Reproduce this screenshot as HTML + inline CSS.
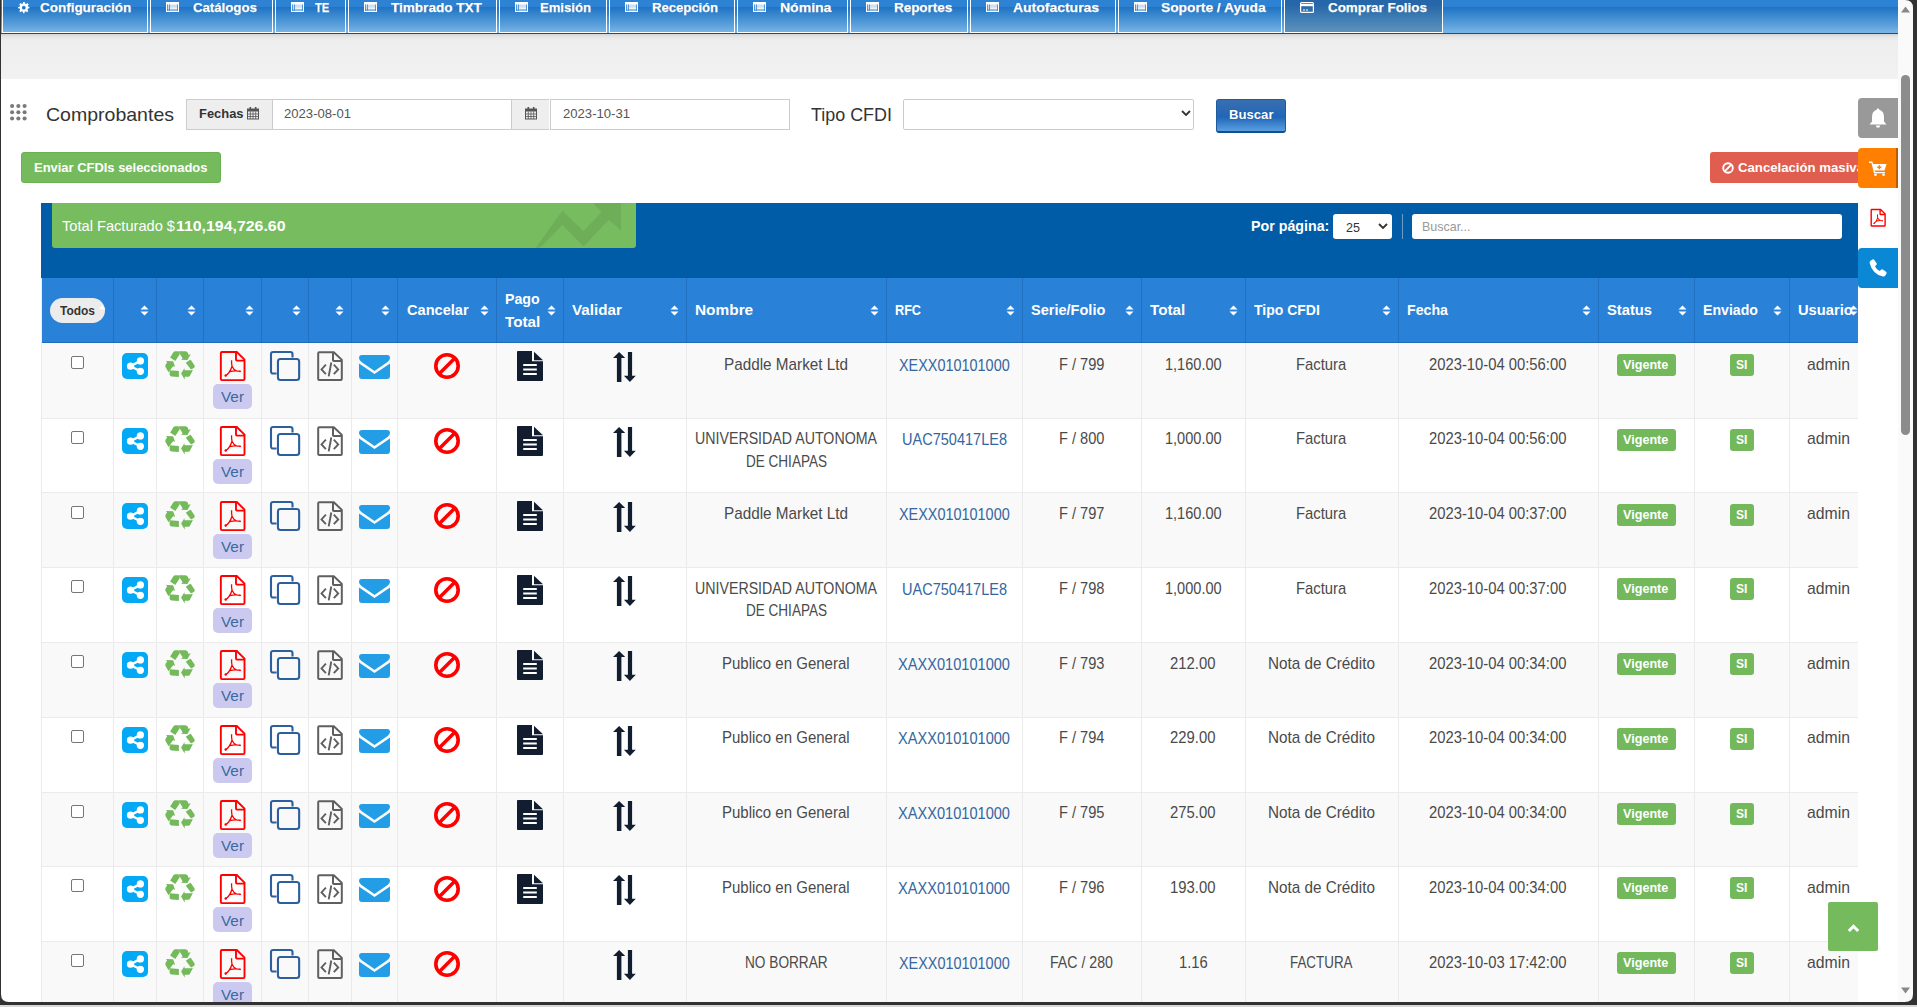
<!DOCTYPE html>
<html><head><meta charset="utf-8"><style>
html,body{margin:0;padding:0;}
body{width:1917px;height:1007px;overflow:hidden;position:relative;background:#fff;font-family:"Liberation Sans",sans-serif;}
.a{position:absolute;box-sizing:content-box;}
svg.a{overflow:visible;}
.t{position:absolute;white-space:nowrap;display:inline-block;transform-origin:0 0;}
</style></head><body>
<div class="a" style="left:1px;top:0;width:1897px;height:33px;background:linear-gradient(#2e82d4 0,#2e82d4 7px,#1f73c3 7px,#3c8ad0 16px,#5ea2dc 26px,#78b4e6 32px);"></div>
<div class="a" style="left:1px;top:33px;width:1897px;height:1px;background:#17508f;"></div>
<div class="a" style="left:2px;top:-2px;width:144px;height:34px;border:1px solid #fff;border-top:0;"></div>
<svg class="a" style="left:18px;top:1.6px;" width="11.6" height="11.3" viewBox="0 0 24 24"><path fill="#fff" d="M12 0l2 0 .6 3.2a9 9 0 0 1 2.3 1l2.7-1.9 2.8 2.8-1.9 2.7a9 9 0 0 1 1 2.3L24 10.700v2.600l-3.200.6a9 9 0 0 1-1 2.300l1.9 2.700-2.800 2.800-2.700-1.900a9 9 0 0 1-2.300 1L13.300 24h-2.600l-.6-3.200a9 9 0 0 1-2.300-1l-2.700 1.900-2.800-2.800 1.900-2.700a9 9 0 0 1-1-2.300L0 13.300v-2.600l3.200-.6a9 9 0 0 1 1-2.300L2.300 5.100l2.800-2.800 2.700 1.900a9 9 0 0 1 2.300-1L10.700 0zM12 8a4 4 0 1 0 0 8 4 4 0 1 0 0-8z"></path></svg>
<span class="t" style="left: 39.8px; top: -0.3px; font-size: 13px; line-height: 16px; color: rgb(255, 255, 255); font-weight: bold; text-shadow: rgb(26, 79, 138) -0.5px -0.5px 0.5px; -webkit-text-stroke: 0.25px rgb(255, 255, 255); transform: scaleX(1.0351);">Configuración</span>
<div class="a" style="left:150px;top:-2px;width:121px;height:34px;border:1px solid #fff;border-top:0;"></div>
<svg class="a" style="left:166px;top:2px;" width="13" height="10" viewBox="0 0 13 10"><rect x="0" y="0" width="13" height="10" fill="#fff"></rect><rect x="1" y="2.5" width="11" height="6.5" fill="#cddff0"></rect><path d="M1.5 2.5V9M3.5 2.5V9M11.5 2.5V9M1 8H12" stroke="#4a8fd6" stroke-width="0.9"></path><path d="M4 6.2H11" stroke="#fff" stroke-width="0.9"></path></svg>
<span class="t" style="left: 192.8px; top: -0.3px; font-size: 13px; line-height: 16px; color: rgb(255, 255, 255); font-weight: bold; text-shadow: rgb(26, 79, 138) -0.5px -0.5px 0.5px; -webkit-text-stroke: 0.25px rgb(255, 255, 255); transform: scaleX(1.0152);">Catálogos</span>
<div class="a" style="left:275px;top:-2px;width:69px;height:34px;border:1px solid #fff;border-top:0;"></div>
<svg class="a" style="left:291px;top:2px;" width="13" height="10" viewBox="0 0 13 10"><rect x="0" y="0" width="13" height="10" fill="#fff"></rect><rect x="1" y="2.5" width="11" height="6.5" fill="#cddff0"></rect><path d="M1.5 2.5V9M3.5 2.5V9M11.5 2.5V9M1 8H12" stroke="#4a8fd6" stroke-width="0.9"></path><path d="M4 6.2H11" stroke="#fff" stroke-width="0.9"></path></svg>
<span class="t" style="left: 315px; top: -0.3px; font-size: 13px; line-height: 16px; color: rgb(255, 255, 255); font-weight: bold; text-shadow: rgb(26, 79, 138) -0.5px -0.5px 0.5px; -webkit-text-stroke: 0.25px rgb(255, 255, 255); transform: scaleX(0.8541);">TE</span>
<div class="a" style="left:348px;top:-2px;width:147px;height:34px;border:1px solid #fff;border-top:0;"></div>
<svg class="a" style="left:364px;top:2px;" width="13" height="10" viewBox="0 0 13 10"><rect x="0" y="0" width="13" height="10" fill="#fff"></rect><rect x="1" y="2.5" width="11" height="6.5" fill="#cddff0"></rect><path d="M1.5 2.5V9M3.5 2.5V9M11.5 2.5V9M1 8H12" stroke="#4a8fd6" stroke-width="0.9"></path><path d="M4 6.2H11" stroke="#fff" stroke-width="0.9"></path></svg>
<span class="t" style="left: 390.6px; top: -0.3px; font-size: 13px; line-height: 16px; color: rgb(255, 255, 255); font-weight: bold; text-shadow: rgb(26, 79, 138) -0.5px -0.5px 0.5px; -webkit-text-stroke: 0.25px rgb(255, 255, 255); transform: scaleX(1.0418);">Timbrado TXT</span>
<div class="a" style="left:499px;top:-2px;width:106px;height:34px;border:1px solid #fff;border-top:0;"></div>
<svg class="a" style="left:515px;top:2px;" width="13" height="10" viewBox="0 0 13 10"><rect x="0" y="0" width="13" height="10" fill="#fff"></rect><rect x="1" y="2.5" width="11" height="6.5" fill="#cddff0"></rect><path d="M1.5 2.5V9M3.5 2.5V9M11.5 2.5V9M1 8H12" stroke="#4a8fd6" stroke-width="0.9"></path><path d="M4 6.2H11" stroke="#fff" stroke-width="0.9"></path></svg>
<span class="t" style="left: 539.5px; top: -0.3px; font-size: 13px; line-height: 16px; color: rgb(255, 255, 255); font-weight: bold; text-shadow: rgb(26, 79, 138) -0.5px -0.5px 0.5px; -webkit-text-stroke: 0.25px rgb(255, 255, 255); transform: scaleX(1.0064);">Emisión</span>
<div class="a" style="left:609px;top:-2px;width:124px;height:34px;border:1px solid #fff;border-top:0;"></div>
<svg class="a" style="left:625px;top:2px;" width="13" height="10" viewBox="0 0 13 10"><rect x="0" y="0" width="13" height="10" fill="#fff"></rect><rect x="1" y="2.5" width="11" height="6.5" fill="#cddff0"></rect><path d="M1.5 2.5V9M3.5 2.5V9M11.5 2.5V9M1 8H12" stroke="#4a8fd6" stroke-width="0.9"></path><path d="M4 6.2H11" stroke="#fff" stroke-width="0.9"></path></svg>
<span class="t" style="left: 652.2px; top: -0.3px; font-size: 13px; line-height: 16px; color: rgb(255, 255, 255); font-weight: bold; text-shadow: rgb(26, 79, 138) -0.5px -0.5px 0.5px; -webkit-text-stroke: 0.25px rgb(255, 255, 255); transform: scaleX(1.0038);">Recepción</span>
<div class="a" style="left:737px;top:-2px;width:109px;height:34px;border:1px solid #fff;border-top:0;"></div>
<svg class="a" style="left:753px;top:2px;" width="13" height="10" viewBox="0 0 13 10"><rect x="0" y="0" width="13" height="10" fill="#fff"></rect><rect x="1" y="2.5" width="11" height="6.5" fill="#cddff0"></rect><path d="M1.5 2.5V9M3.5 2.5V9M11.5 2.5V9M1 8H12" stroke="#4a8fd6" stroke-width="0.9"></path><path d="M4 6.2H11" stroke="#fff" stroke-width="0.9"></path></svg>
<span class="t" style="left: 780.3px; top: -0.3px; font-size: 13px; line-height: 16px; color: rgb(255, 255, 255); font-weight: bold; text-shadow: rgb(26, 79, 138) -0.5px -0.5px 0.5px; -webkit-text-stroke: 0.25px rgb(255, 255, 255); transform: scaleX(1.0782);">Nómina</span>
<div class="a" style="left:850px;top:-2px;width:116px;height:34px;border:1px solid #fff;border-top:0;"></div>
<svg class="a" style="left:866px;top:2px;" width="13" height="10" viewBox="0 0 13 10"><rect x="0" y="0" width="13" height="10" fill="#fff"></rect><rect x="1" y="2.5" width="11" height="6.5" fill="#cddff0"></rect><path d="M1.5 2.5V9M3.5 2.5V9M11.5 2.5V9M1 8H12" stroke="#4a8fd6" stroke-width="0.9"></path><path d="M4 6.2H11" stroke="#fff" stroke-width="0.9"></path></svg>
<span class="t" style="left: 893.5px; top: -0.3px; font-size: 13px; line-height: 16px; color: rgb(255, 255, 255); font-weight: bold; text-shadow: rgb(26, 79, 138) -0.5px -0.5px 0.5px; -webkit-text-stroke: 0.25px rgb(255, 255, 255); transform: scaleX(1.0327);">Reportes</span>
<div class="a" style="left:970px;top:-2px;width:144px;height:34px;border:1px solid #fff;border-top:0;"></div>
<svg class="a" style="left:986px;top:2px;" width="13" height="10" viewBox="0 0 13 10"><rect x="0" y="0" width="13" height="10" fill="#fff"></rect><rect x="1" y="2.5" width="11" height="6.5" fill="#cddff0"></rect><path d="M1.5 2.5V9M3.5 2.5V9M11.5 2.5V9M1 8H12" stroke="#4a8fd6" stroke-width="0.9"></path><path d="M4 6.2H11" stroke="#fff" stroke-width="0.9"></path></svg>
<span class="t" style="left: 1013px; top: -0.3px; font-size: 13px; line-height: 16px; color: rgb(255, 255, 255); font-weight: bold; text-shadow: rgb(26, 79, 138) -0.5px -0.5px 0.5px; -webkit-text-stroke: 0.25px rgb(255, 255, 255); transform: scaleX(1.0737);">Autofacturas</span>
<div class="a" style="left:1118px;top:-2px;width:162px;height:34px;border:1px solid #fff;border-top:0;"></div>
<svg class="a" style="left:1134px;top:2px;" width="13" height="10" viewBox="0 0 13 10"><rect x="0" y="0" width="13" height="10" fill="#fff"></rect><rect x="1" y="2.5" width="11" height="6.5" fill="#cddff0"></rect><path d="M1.5 2.5V9M3.5 2.5V9M11.5 2.5V9M1 8H12" stroke="#4a8fd6" stroke-width="0.9"></path><path d="M4 6.2H11" stroke="#fff" stroke-width="0.9"></path></svg>
<span class="t" style="left: 1160.9px; top: -0.3px; font-size: 13px; line-height: 16px; color: rgb(255, 255, 255); font-weight: bold; text-shadow: rgb(26, 79, 138) -0.5px -0.5px 0.5px; -webkit-text-stroke: 0.25px rgb(255, 255, 255); transform: scaleX(1.0596);">Soporte / Ayuda</span>
<div class="a" style="left:1284px;top:-2px;width:157px;height:34px;border:1px solid #fff;border-top:0;background:linear-gradient(#2566a8 0,#2667a9 7px,#2a68a8 8px,#3e7db4 20px,#5a8fb9 32px);"></div>
<svg class="a" style="left:1300px;top:2px;" width="14" height="11" viewBox="0 0 14 11"><rect x="0.6" y="0.6" width="12.8" height="9.8" rx="1" fill="none" stroke="#fff" stroke-width="1.2"></rect><rect x="1" y="2" width="12" height="2.2" fill="#fff"></rect><path d="M3 8h2M6 8h2" stroke="#fff" stroke-width="1"></path></svg>
<span class="t" style="left: 1328.3px; top: -0.3px; font-size: 13px; line-height: 16px; color: rgb(255, 255, 255); font-weight: bold; text-shadow: rgb(26, 79, 138) -0.5px -0.5px 0.5px; -webkit-text-stroke: 0.25px rgb(255, 255, 255); transform: scaleX(1.0294);">Comprar Folios</span>
<div class="a" style="left:1px;top:34px;width:1897px;height:45px;background:linear-gradient(#d4d4d4 0,#e6e6e6 3px,#eeeeee 7px,#f1f1f1 100%);"></div>
<svg class="a" style="left:0px;top:0px;" width="40" height="130" viewBox="0 0 40 130"><circle cx="12.10" cy="106.00" r="2.05" fill="#7a7a7a"></circle><circle cx="18.35" cy="106.00" r="2.05" fill="#7a7a7a"></circle><circle cx="24.60" cy="106.00" r="2.05" fill="#7a7a7a"></circle><circle cx="12.10" cy="112.25" r="2.05" fill="#7a7a7a"></circle><circle cx="18.35" cy="112.25" r="2.05" fill="#7a7a7a"></circle><circle cx="24.60" cy="112.25" r="2.05" fill="#7a7a7a"></circle><circle cx="12.10" cy="118.50" r="2.05" fill="#7a7a7a"></circle><circle cx="18.35" cy="118.50" r="2.05" fill="#7a7a7a"></circle><circle cx="24.60" cy="118.50" r="2.05" fill="#7a7a7a"></circle></svg>
<span class="t" style="left: 46px; top: 102.92px; font-size: 19px; line-height: 24px; color: rgb(51, 51, 51); transform: scaleX(1.0271);">Comprobantes</span>
<div class="a" style="left:186px;top:99px;width:85px;height:29px;background:#eee;border:1px solid #ccc;border-right:0;"></div>
<span class="t" style="left: 199px; top: 105.5px; font-size: 13px; line-height: 16px; color: rgb(51, 51, 51); font-weight: bold; transform: scaleX(0.993);">Fechas</span>
<svg class="a" style="left:247px;top:107px;" width="12" height="12" viewBox="0 0 12 12"><rect x="0.5" y="2" width="11" height="10" fill="none" stroke="#555" stroke-width="1"></rect><rect x="0.5" y="2" width="11" height="2.5" fill="#555"></rect><path d="M0.5 7h11M0.5 9.5h11M3.3 4.5v7.5M6 4.5v7.5M8.7 4.5v7.5" stroke="#555" stroke-width="0.8"></path><rect x="2.5" y="0" width="1.6" height="3" fill="#555"></rect><rect x="7.9" y="0" width="1.6" height="3" fill="#555"></rect></svg>
<div class="a" style="left:272px;top:99px;width:238px;height:29px;background:#fff;border:1px solid #ccc;"></div>
<span class="t" style="left: 284px; top: 106px; font-size: 13px; line-height: 16px; color: rgb(85, 85, 85); transform: scaleX(1.0075);">2023-08-01</span>
<div class="a" style="left:512px;top:99px;width:37px;height:29px;background:#eee;border:1px solid #ccc;border-left:0;border-right:0;"></div>
<svg class="a" style="left:525px;top:107px;" width="12" height="12" viewBox="0 0 12 12"><rect x="0.5" y="2" width="11" height="10" fill="none" stroke="#555" stroke-width="1"></rect><rect x="0.5" y="2" width="11" height="2.5" fill="#555"></rect><path d="M0.5 7h11M0.5 9.5h11M3.3 4.5v7.5M6 4.5v7.5M8.7 4.5v7.5" stroke="#555" stroke-width="0.8"></path><rect x="2.5" y="0" width="1.6" height="3" fill="#555"></rect><rect x="7.9" y="0" width="1.6" height="3" fill="#555"></rect></svg>
<div class="a" style="left:550px;top:99px;width:238px;height:29px;background:#fff;border:1px solid #ccc;"></div>
<span class="t" style="left: 563px; top: 106px; font-size: 13px; line-height: 16px; color: rgb(85, 85, 85); transform: scaleX(1.0075);">2023-10-31</span>
<span class="t" style="left: 811px; top: 102.92px; font-size: 19px; line-height: 24px; color: rgb(51, 51, 51); transform: scaleX(0.9432);">Tipo CFDI</span>
<div class="a" style="left:903px;top:99px;width:289px;height:29px;background:#fff;border:1px solid #ccc;border-radius:2px;"></div>
<svg class="a" style="left:1181px;top:110px;" width="10" height="7" viewBox="0 0 10 7"><path d="M1 1l4 4 4-4" fill="none" stroke="#333" stroke-width="1.8"></path></svg>
<div class="a" style="left:1216px;top:99px;width:68px;height:31px;background:linear-gradient(#3a6fb0 0,#1f66b8 55%,#5c9ee0 100%);border:1px solid #1d5aa0;border-bottom:2px solid #11508f;border-radius:3px;"></div>
<span class="t" style="left: 1229px; top: 106.5px; font-size: 13px; line-height: 16px; color: rgb(255, 255, 255); font-weight: bold; text-shadow: rgb(18, 74, 138) 0px 0px 1px; transform: scaleX(1.0096);">Buscar</span>
<div class="a" style="left:21px;top:152px;width:198px;height:29px;background:#75bb5e;border:1px solid #6bb052;border-radius:3px;"></div>
<span class="t" style="left: 34.4px; top: 159.5px; font-size: 13px; line-height: 16px; color: rgb(255, 255, 255); font-weight: bold; transform: scaleX(0.9958);">Enviar CFDIs seleccionados</span>
<div class="a" style="left:1710px;top:152px;width:160px;height:31px;background:#e05e50;border-radius:3px;"></div>
<svg class="a" style="left:1722px;top:161.5px;" width="12" height="12" viewBox="0 0 12 12"><circle cx="6" cy="6" r="4.8" fill="none" stroke="#fff" stroke-width="1.9"></circle><path d="M9.3 2.7L2.7 9.3" stroke="#fff" stroke-width="1.9"></path></svg>
<span class="t" style="left: 1737.6px; top: 159.5px; font-size: 13px; line-height: 16px; color: rgb(255, 255, 255); font-weight: bold; transform: scaleX(1.0137);">Cancelación masiva</span>
<div class="a" style="left:41px;top:203px;width:1817px;height:75px;background:#005ca6;"></div>
<div class="a" style="left:52px;top:203px;width:584px;height:45px;background:#77bc5e;border-radius:0 0 3px 3px;"></div>
<svg class="a" style="left:0px;top:0px;" width="1" height="1" viewBox="0 0 1 1"><path d="M535.9 247.8L562.4 210.5L583.4 231.2L601.4 212.2L593.2 203L621 203L621 230.5L608.8 219.7L583.4 246.5L562.4 224.8L540 247.8Z" fill="#6fae58"></path></svg>
<span class="t" style="left: 62.3px; top: 216.3px; font-size: 15px; line-height: 19px; color: rgb(255, 255, 255); transform: scaleX(0.9749);">Total Facturado $</span>
<span class="t" style="left: 175.5px; top: 216.3px; font-size: 15px; line-height: 19px; color: rgb(255, 255, 255); font-weight: bold; transform: scaleX(1.0585);">110,194,726.60</span>
<span class="t" style="left: 1250.6px; top: 216.3px; font-size: 15px; line-height: 19px; color: rgb(255, 255, 255); font-weight: bold; transform: scaleX(0.9489);">Por página:</span>
<div class="a" style="left:1333px;top:214px;width:59px;height:25px;background:#fff;border-radius:3px;"></div>
<span class="t" style="left: 1346px; top: 219.5px; font-size: 13px; line-height: 16px; color: rgb(51, 51, 51); transform: scaleX(0.9676);">25</span>
<svg class="a" style="left:1378px;top:223px;" width="10" height="7" viewBox="0 0 10 7"><path d="M1 1l4 4 4-4" fill="none" stroke="#333" stroke-width="1.8"></path></svg>
<div class="a" style="left:1402px;top:214px;width:1px;height:25px;background:#6f9cc6;"></div>
<div class="a" style="left:1412px;top:214px;width:430px;height:25px;background:#fff;border-radius:3px;"></div>
<span class="t" style="left: 1421.5px; top: 218.5px; font-size: 13px; line-height: 16px; color: rgb(153, 153, 153); transform: scaleX(0.9589);">Buscar...</span>
<div class="a" style="left:41px;top:278px;width:1817px;height:64px;background:#2981d8;"></div>
<div class="a" style="left:41px;top:342px;width:1817px;height:1px;background:#1f6cbc;"></div>
<div class="a" style="left:113px;top:278px;width:1px;height:64px;background:#2470c0;"></div>
<div class="a" style="left:156px;top:278px;width:1px;height:64px;background:#2470c0;"></div>
<div class="a" style="left:203px;top:278px;width:1px;height:64px;background:#2470c0;"></div>
<div class="a" style="left:261px;top:278px;width:1px;height:64px;background:#2470c0;"></div>
<div class="a" style="left:308px;top:278px;width:1px;height:64px;background:#2470c0;"></div>
<div class="a" style="left:351px;top:278px;width:1px;height:64px;background:#2470c0;"></div>
<div class="a" style="left:397px;top:278px;width:1px;height:64px;background:#2470c0;"></div>
<div class="a" style="left:496px;top:278px;width:1px;height:64px;background:#2470c0;"></div>
<div class="a" style="left:563px;top:278px;width:1px;height:64px;background:#2470c0;"></div>
<div class="a" style="left:686px;top:278px;width:1px;height:64px;background:#2470c0;"></div>
<div class="a" style="left:886px;top:278px;width:1px;height:64px;background:#2470c0;"></div>
<div class="a" style="left:1022px;top:278px;width:1px;height:64px;background:#2470c0;"></div>
<div class="a" style="left:1141px;top:278px;width:1px;height:64px;background:#2470c0;"></div>
<div class="a" style="left:1245px;top:278px;width:1px;height:64px;background:#2470c0;"></div>
<div class="a" style="left:1398px;top:278px;width:1px;height:64px;background:#2470c0;"></div>
<div class="a" style="left:1598px;top:278px;width:1px;height:64px;background:#2470c0;"></div>
<div class="a" style="left:1694px;top:278px;width:1px;height:64px;background:#2470c0;"></div>
<div class="a" style="left:1789px;top:278px;width:1px;height:64px;background:#2470c0;"></div>
<div class="a" style="left:41px;top:278px;width:1px;height:65px;background:#e6eef8;"></div>
<div class="a" style="left:50px;top:298px;width:55px;height:25px;background:#ececec;border-radius:13px;"></div>
<span class="t" style="left: 60px; top: 302.5px; font-size: 13px; line-height: 16px; color: rgb(51, 51, 51); font-weight: bold; transform: scaleX(0.9203);">Todos</span>
<svg class="a" style="left:0px;top:0px;" width="1" height="1" viewBox="0 0 1 1"><path d="M98.3 309.3L102 305.5L105.7 309.3Z" fill="#fff"></path></svg>
<svg class="a" style="left:140.0px;top:304.5px;" width="9" height="11" viewBox="0 0 9 11"><path d="M0.5 4.6L4.5 0.5 8.5 4.6Z M0.5 6.4L4.5 10.5 8.5 6.4Z" fill="#fff"></path></svg>
<svg class="a" style="left:187.0px;top:304.5px;" width="9" height="11" viewBox="0 0 9 11"><path d="M0.5 4.6L4.5 0.5 8.5 4.6Z M0.5 6.4L4.5 10.5 8.5 6.4Z" fill="#fff"></path></svg>
<svg class="a" style="left:245.0px;top:304.5px;" width="9" height="11" viewBox="0 0 9 11"><path d="M0.5 4.6L4.5 0.5 8.5 4.6Z M0.5 6.4L4.5 10.5 8.5 6.4Z" fill="#fff"></path></svg>
<svg class="a" style="left:292.0px;top:304.5px;" width="9" height="11" viewBox="0 0 9 11"><path d="M0.5 4.6L4.5 0.5 8.5 4.6Z M0.5 6.4L4.5 10.5 8.5 6.4Z" fill="#fff"></path></svg>
<svg class="a" style="left:335.0px;top:304.5px;" width="9" height="11" viewBox="0 0 9 11"><path d="M0.5 4.6L4.5 0.5 8.5 4.6Z M0.5 6.4L4.5 10.5 8.5 6.4Z" fill="#fff"></path></svg>
<svg class="a" style="left:381.0px;top:304.5px;" width="9" height="11" viewBox="0 0 9 11"><path d="M0.5 4.6L4.5 0.5 8.5 4.6Z M0.5 6.4L4.5 10.5 8.5 6.4Z" fill="#fff"></path></svg>
<svg class="a" style="left:480.0px;top:304.5px;" width="9" height="11" viewBox="0 0 9 11"><path d="M0.5 4.6L4.5 0.5 8.5 4.6Z M0.5 6.4L4.5 10.5 8.5 6.4Z" fill="#fff"></path></svg>
<svg class="a" style="left:547.0px;top:304.5px;" width="9" height="11" viewBox="0 0 9 11"><path d="M0.5 4.6L4.5 0.5 8.5 4.6Z M0.5 6.4L4.5 10.5 8.5 6.4Z" fill="#fff"></path></svg>
<svg class="a" style="left:670.0px;top:304.5px;" width="9" height="11" viewBox="0 0 9 11"><path d="M0.5 4.6L4.5 0.5 8.5 4.6Z M0.5 6.4L4.5 10.5 8.5 6.4Z" fill="#fff"></path></svg>
<svg class="a" style="left:870.0px;top:304.5px;" width="9" height="11" viewBox="0 0 9 11"><path d="M0.5 4.6L4.5 0.5 8.5 4.6Z M0.5 6.4L4.5 10.5 8.5 6.4Z" fill="#fff"></path></svg>
<svg class="a" style="left:1006.0px;top:304.5px;" width="9" height="11" viewBox="0 0 9 11"><path d="M0.5 4.6L4.5 0.5 8.5 4.6Z M0.5 6.4L4.5 10.5 8.5 6.4Z" fill="#fff"></path></svg>
<svg class="a" style="left:1125.0px;top:304.5px;" width="9" height="11" viewBox="0 0 9 11"><path d="M0.5 4.6L4.5 0.5 8.5 4.6Z M0.5 6.4L4.5 10.5 8.5 6.4Z" fill="#fff"></path></svg>
<svg class="a" style="left:1229.0px;top:304.5px;" width="9" height="11" viewBox="0 0 9 11"><path d="M0.5 4.6L4.5 0.5 8.5 4.6Z M0.5 6.4L4.5 10.5 8.5 6.4Z" fill="#fff"></path></svg>
<svg class="a" style="left:1382.0px;top:304.5px;" width="9" height="11" viewBox="0 0 9 11"><path d="M0.5 4.6L4.5 0.5 8.5 4.6Z M0.5 6.4L4.5 10.5 8.5 6.4Z" fill="#fff"></path></svg>
<svg class="a" style="left:1582.0px;top:304.5px;" width="9" height="11" viewBox="0 0 9 11"><path d="M0.5 4.6L4.5 0.5 8.5 4.6Z M0.5 6.4L4.5 10.5 8.5 6.4Z" fill="#fff"></path></svg>
<svg class="a" style="left:1678.0px;top:304.5px;" width="9" height="11" viewBox="0 0 9 11"><path d="M0.5 4.6L4.5 0.5 8.5 4.6Z M0.5 6.4L4.5 10.5 8.5 6.4Z" fill="#fff"></path></svg>
<svg class="a" style="left:1773.0px;top:304.5px;" width="9" height="11" viewBox="0 0 9 11"><path d="M0.5 4.6L4.5 0.5 8.5 4.6Z M0.5 6.4L4.5 10.5 8.5 6.4Z" fill="#fff"></path></svg>
<svg class="a" style="left:1849.0px;top:304.5px;" width="9" height="11" viewBox="0 0 9 11"><path d="M0.5 4.6L4.5 0.5 8.5 4.6Z M0.5 6.4L4.5 10.5 8.5 6.4Z" fill="#fff"></path></svg>
<span class="t" style="left: 407.4px; top: 299.5px; font-size: 15px; line-height: 19px; color: rgb(255, 255, 255); font-weight: bold; transform: scaleX(0.972);">Cancelar</span>
<span class="t" style="left: 572px; top: 299.5px; font-size: 15px; line-height: 19px; color: rgb(255, 255, 255); font-weight: bold; transform: scaleX(1.0121);">Validar</span>
<span class="t" style="left: 694.6px; top: 299.5px; font-size: 15px; line-height: 19px; color: rgb(255, 255, 255); font-weight: bold; transform: scaleX(1.0267);">Nombre</span>
<span class="t" style="left: 895px; top: 299.5px; font-size: 15px; line-height: 19px; color: rgb(255, 255, 255); font-weight: bold; transform: scaleX(0.8434);">RFC</span>
<span class="t" style="left: 1031px; top: 299.5px; font-size: 15px; line-height: 19px; color: rgb(255, 255, 255); font-weight: bold; transform: scaleX(0.9689);">Serie/Folio</span>
<span class="t" style="left: 1150px; top: 299.5px; font-size: 15px; line-height: 19px; color: rgb(255, 255, 255); font-weight: bold; transform: scaleX(1.0139);">Total</span>
<span class="t" style="left: 1254px; top: 299.5px; font-size: 15px; line-height: 19px; color: rgb(255, 255, 255); font-weight: bold; transform: scaleX(0.9327);">Tipo CFDI</span>
<span class="t" style="left: 1406.7px; top: 299.5px; font-size: 15px; line-height: 19px; color: rgb(255, 255, 255); font-weight: bold; transform: scaleX(0.9456);">Fecha</span>
<span class="t" style="left: 1606.5px; top: 299.5px; font-size: 15px; line-height: 19px; color: rgb(255, 255, 255); font-weight: bold; transform: scaleX(0.9816);">Status</span>
<span class="t" style="left: 1703px; top: 299.5px; font-size: 15px; line-height: 19px; color: rgb(255, 255, 255); font-weight: bold; transform: scaleX(0.9424);">Enviado</span>
<span class="t" style="left: 1797.9px; top: 299.5px; font-size: 15px; line-height: 19px; color: rgb(255, 255, 255); font-weight: bold; transform: scaleX(0.9792);">Usuario</span>
<span class="t" style="left: 505px; top: 289.3px; font-size: 15px; line-height: 19px; color: rgb(255, 255, 255); font-weight: bold; transform: scaleX(0.9431);">Pago</span>
<span class="t" style="left: 505px; top: 311.6px; font-size: 15px; line-height: 19px; color: rgb(255, 255, 255); font-weight: bold; transform: scaleX(1.0167);">Total</span>
<div class="a" style="left:41px;top:343.00px;width:1817px;height:74.75px;background:#f9f9f9;"></div>
<div class="a" style="left:71px;top:356.0px;width:11px;height:11px;background:#fff;border:1px solid #767676;border-radius:2px;"></div>
<svg class="a" style="left:122px;top:353.0px;" width="26" height="26" viewBox="0 0 26 26"><rect width="26" height="26" rx="5" fill="#03a9f4"></rect><circle cx="8.5" cy="13.2" r="3.6" fill="#fff"></circle><circle cx="18.4" cy="7.9" r="3.6" fill="#fff"></circle><circle cx="18.4" cy="18.3" r="3.6" fill="#fff"></circle><path d="M8.5 13.2L18.4 7.9M8.5 13.2L18.4 18.3" stroke="#fff" stroke-width="2.4"></path></svg>
<svg class="a" style="left:160px;top:346.0px;" width="40" height="40" viewBox="0 0 40 40"><g fill="#74b95a"><path d="M10.1 11.5L13.6 5.9Q14.5 5 15.8 5.2L18.3 5.3L19.9 8.1L15.3 15.1Z"></path><path d="M18.5 5.2L25.4 5.2Q27 5.4 27.8 6.8L28.6 8.9L30.8 8L27.4 13.9L21.1 13.7L22.6 12.3L19.9 7.9Z"></path><path d="M25.8 16.7L29.8 13.9Q30.6 13.5 31.2 14.4L34.6 19.5Q35 21 34.2 21.8L31 23.4Z"></path><path d="M33 23.8L29.8 30Q29.4 30.7 28.4 30.8L24.8 30.8L24.6 33.4L21.1 27.4L24.4 22.2L24.6 24.2L31.5 24.2Z"></path><path d="M9.7 24.2L18.9 25L18.9 31L11.5 30.6Q9.9 30.3 9.6 28.5Z"></path><path d="M6 15.1L13.1 15.3L15.1 20.7L13.1 20.2L8.5 26.2L5.5 21Q5 20 5.6 18.8L7.2 16.3Z"></path></g></svg>
<svg class="a" style="left:212px;top:346.0px;" width="40" height="40" viewBox="0 0 40 40"><path d="M9.9 6H24.8L32.5 13.6V33Q32.5 34.1 31.4 34.1H9.9Q8.85 34.1 8.85 33V7Q8.85 6 9.9 6Z" fill="none" stroke="#f00" stroke-width="1.9"></path><path d="M24 6V13.6Q24 14.6 25 14.6H32.5" fill="none" stroke="#f00" stroke-width="1.9"></path><path d="M19.6 14.3C19.4 16.5 19.6 18.5 20 20.2C18.8 24 16.5 28 13.2 30M20 20.2C21 22.5 22.5 24 24.5 24.8C26 25.2 28.2 25 28.5 25.5M17.8 25.6C20 25 22.5 24.7 24.5 24.8" fill="none" stroke="#f00" stroke-width="1.3"></path><circle cx="13.7" cy="29.5" r="1.2" fill="#f00"></circle><circle cx="28" cy="25.3" r="0.9" fill="#f00"></circle></svg>
<div class="a" style="left:213px;top:384.0px;width:39px;height:25px;background:#cbc9f0;border-radius:5px;"></div>
<span class="t" style="left: 221px; top: 387.3px; font-size: 15px; line-height: 19px; color: rgb(58, 106, 160); transform: scaleX(1.0215);">Ver</span>
<svg class="a" style="left:270px;top:351.0px;" width="31" height="31" viewBox="0 0 31 31"><path d="M6.6 22.5H3.2Q1 22.5 1 20.3V3.2Q1 1 3.2 1H20.3Q22.5 1 22.5 3.2V6.6" fill="none" stroke="#2c5f9c" stroke-width="2.1"></path><rect x="7.95" y="7.95" width="21.2" height="21" rx="2.5" fill="none" stroke="#2c5f9c" stroke-width="2.1"></rect></svg>
<svg class="a" style="left:317px;top:351.0px;" width="26" height="30.5" viewBox="0 0 26 30.5"><path d="M2.2 1.2H16.8L24.8 8.9V28Q24.8 29 23.8 29H2.2Q1.2 29 1.2 28V2.2Q1.2 1.2 2.2 1.2Z" fill="none" stroke="#5f5f5f" stroke-width="2"></path><path d="M16 1.2V9.2Q16 10 16.8 10H24.8" fill="none" stroke="#5f5f5f" stroke-width="2"></path><path d="M8.9 13.7L4.5 18.4L8.9 23.2M16.8 13.7L21.2 18.4L16.8 23.2M14.3 11.5L11.7 25.4" fill="none" stroke="#5f5f5f" stroke-width="1.9"></path></svg>
<svg class="a" style="left:359px;top:355.0px;" width="31" height="24" viewBox="0 0 31 24"><path d="M0 3Q0 0 3 0H28Q31 0 31 3Q31 5 28.5 7L15.5 16L2.5 7Q0 5 0 3Z" fill="#229de6"></path><path d="M0 8.5L15.5 19L31 8.5V21Q31 24 28 24H3Q0 24 0 21Z" fill="#229de6"></path></svg>
<svg class="a" style="left:434px;top:353.0px;" width="26" height="26" viewBox="0 0 26 26"><circle cx="13" cy="13" r="11.2" fill="none" stroke="#f00" stroke-width="3.6"></circle><path d="M20.5 5.5L5.5 20.5" stroke="#f00" stroke-width="3.6"></path></svg>
<svg class="a" style="left:517px;top:351.0px;" width="26" height="30" viewBox="0 0 26 30"><path d="M0.8 0Q0 0 0 1V29.3Q0 30 0.8 30H25Q26 30 26 29V10.2H15V0Z" fill="#121e30"></path><path d="M17 0.8L26 9.3H17Z" fill="#121e30"></path><path d="M6.2 14h13.6M6.2 18.5h13.6M6.2 23h13.6" stroke="#fff" stroke-width="1.9"></path></svg>
<svg class="a" style="left:613px;top:352.0px;" width="23" height="30" viewBox="0 0 23 30"><path d="M0 6H3.9V30H8.4V6H12.2L6.1 0Z" fill="#121e30"></path><path d="M14.9 0H19.1V23.7H22.8L16.9 30L10.9 23.7H14.9Z" fill="#121e30"></path></svg>
<span class="t" style="left: 724px; top: 354.51px; font-size: 15.7px; line-height: 20px; color: rgb(74, 74, 74); transform: scaleX(0.9739);">Paddle Market Ltd</span>
<span class="t" style="left: 898.65px; top: 355.51px; font-size: 15.7px; line-height: 20px; color: rgb(52, 102, 160); transform: scaleX(0.9195);">XEXX010101000</span>
<span class="t" style="left: 1058.75px; top: 354.51px; font-size: 15.7px; line-height: 20px; color: rgb(74, 74, 74); transform: scaleX(0.9315);">F / 799</span>
<span class="t" style="left: 1164.7px; top: 354.51px; font-size: 15.7px; line-height: 20px; color: rgb(74, 74, 74); transform: scaleX(0.9267);">1,160.00</span>
<span class="t" style="left: 1296.45px; top: 354.51px; font-size: 15.7px; line-height: 20px; color: rgb(74, 74, 74); transform: scaleX(0.942);">Factura</span>
<span class="t" style="left: 1429.3px; top: 354.51px; font-size: 15.7px; line-height: 20px; color: rgb(74, 74, 74); transform: scaleX(0.9432);">2023-10-04 00:56:00</span>
<div class="a" style="left:1617px;top:354.0px;width:59px;height:22px;background:#74b85c;border-radius:3px;"></div>
<span class="t" style="left: 1623.35px; top: 357px; font-size: 13px; line-height: 16px; color: rgb(255, 255, 255); font-weight: bold; transform: scaleX(0.9696);">Vigente</span>
<div class="a" style="left:1730px;top:354.0px;width:24px;height:22px;background:#74b85c;border-radius:3px;"></div>
<span class="t" style="left: 1736.3px; top: 357px; font-size: 13px; line-height: 16px; color: rgb(255, 255, 255); font-weight: bold; transform: scaleX(0.9271);">SI</span>
<span class="t" style="left: 1806.8px; top: 354.51px; font-size: 15.7px; line-height: 20px; color: rgb(74, 74, 74); transform: scaleX(1.0062);">admin</span>
<div class="a" style="left:41px;top:417.75px;width:1817px;height:74.75px;background:#fff;"></div>
<div class="a" style="left:41px;top:417.5px;width:1817px;height:1px;background:#ebebeb;"></div>
<div class="a" style="left:71px;top:430.75px;width:11px;height:11px;background:#fff;border:1px solid #767676;border-radius:2px;"></div>
<svg class="a" style="left:122px;top:427.75px;" width="26" height="26" viewBox="0 0 26 26"><rect width="26" height="26" rx="5" fill="#03a9f4"></rect><circle cx="8.5" cy="13.2" r="3.6" fill="#fff"></circle><circle cx="18.4" cy="7.9" r="3.6" fill="#fff"></circle><circle cx="18.4" cy="18.3" r="3.6" fill="#fff"></circle><path d="M8.5 13.2L18.4 7.9M8.5 13.2L18.4 18.3" stroke="#fff" stroke-width="2.4"></path></svg>
<svg class="a" style="left:160px;top:420.75px;" width="40" height="40" viewBox="0 0 40 40"><g fill="#74b95a"><path d="M10.1 11.5L13.6 5.9Q14.5 5 15.8 5.2L18.3 5.3L19.9 8.1L15.3 15.1Z"></path><path d="M18.5 5.2L25.4 5.2Q27 5.4 27.8 6.8L28.6 8.9L30.8 8L27.4 13.9L21.1 13.7L22.6 12.3L19.9 7.9Z"></path><path d="M25.8 16.7L29.8 13.9Q30.6 13.5 31.2 14.4L34.6 19.5Q35 21 34.2 21.8L31 23.4Z"></path><path d="M33 23.8L29.8 30Q29.4 30.7 28.4 30.8L24.8 30.8L24.6 33.4L21.1 27.4L24.4 22.2L24.6 24.2L31.5 24.2Z"></path><path d="M9.7 24.2L18.9 25L18.9 31L11.5 30.6Q9.9 30.3 9.6 28.5Z"></path><path d="M6 15.1L13.1 15.3L15.1 20.7L13.1 20.2L8.5 26.2L5.5 21Q5 20 5.6 18.8L7.2 16.3Z"></path></g></svg>
<svg class="a" style="left:212px;top:420.75px;" width="40" height="40" viewBox="0 0 40 40"><path d="M9.9 6H24.8L32.5 13.6V33Q32.5 34.1 31.4 34.1H9.9Q8.85 34.1 8.85 33V7Q8.85 6 9.9 6Z" fill="none" stroke="#f00" stroke-width="1.9"></path><path d="M24 6V13.6Q24 14.6 25 14.6H32.5" fill="none" stroke="#f00" stroke-width="1.9"></path><path d="M19.6 14.3C19.4 16.5 19.6 18.5 20 20.2C18.8 24 16.5 28 13.2 30M20 20.2C21 22.5 22.5 24 24.5 24.8C26 25.2 28.2 25 28.5 25.5M17.8 25.6C20 25 22.5 24.7 24.5 24.8" fill="none" stroke="#f00" stroke-width="1.3"></path><circle cx="13.7" cy="29.5" r="1.2" fill="#f00"></circle><circle cx="28" cy="25.3" r="0.9" fill="#f00"></circle></svg>
<div class="a" style="left:213px;top:458.75px;width:39px;height:25px;background:#cbc9f0;border-radius:5px;"></div>
<span class="t" style="left: 221px; top: 462.05px; font-size: 15px; line-height: 19px; color: rgb(58, 106, 160); transform: scaleX(1.0215);">Ver</span>
<svg class="a" style="left:270px;top:425.75px;" width="31" height="31" viewBox="0 0 31 31"><path d="M6.6 22.5H3.2Q1 22.5 1 20.3V3.2Q1 1 3.2 1H20.3Q22.5 1 22.5 3.2V6.6" fill="none" stroke="#2c5f9c" stroke-width="2.1"></path><rect x="7.95" y="7.95" width="21.2" height="21" rx="2.5" fill="none" stroke="#2c5f9c" stroke-width="2.1"></rect></svg>
<svg class="a" style="left:317px;top:425.75px;" width="26" height="30.5" viewBox="0 0 26 30.5"><path d="M2.2 1.2H16.8L24.8 8.9V28Q24.8 29 23.8 29H2.2Q1.2 29 1.2 28V2.2Q1.2 1.2 2.2 1.2Z" fill="none" stroke="#5f5f5f" stroke-width="2"></path><path d="M16 1.2V9.2Q16 10 16.8 10H24.8" fill="none" stroke="#5f5f5f" stroke-width="2"></path><path d="M8.9 13.7L4.5 18.4L8.9 23.2M16.8 13.7L21.2 18.4L16.8 23.2M14.3 11.5L11.7 25.4" fill="none" stroke="#5f5f5f" stroke-width="1.9"></path></svg>
<svg class="a" style="left:359px;top:429.75px;" width="31" height="24" viewBox="0 0 31 24"><path d="M0 3Q0 0 3 0H28Q31 0 31 3Q31 5 28.5 7L15.5 16L2.5 7Q0 5 0 3Z" fill="#229de6"></path><path d="M0 8.5L15.5 19L31 8.5V21Q31 24 28 24H3Q0 24 0 21Z" fill="#229de6"></path></svg>
<svg class="a" style="left:434px;top:427.75px;" width="26" height="26" viewBox="0 0 26 26"><circle cx="13" cy="13" r="11.2" fill="none" stroke="#f00" stroke-width="3.6"></circle><path d="M20.5 5.5L5.5 20.5" stroke="#f00" stroke-width="3.6"></path></svg>
<svg class="a" style="left:517px;top:425.75px;" width="26" height="30" viewBox="0 0 26 30"><path d="M0.8 0Q0 0 0 1V29.3Q0 30 0.8 30H25Q26 30 26 29V10.2H15V0Z" fill="#121e30"></path><path d="M17 0.8L26 9.3H17Z" fill="#121e30"></path><path d="M6.2 14h13.6M6.2 18.5h13.6M6.2 23h13.6" stroke="#fff" stroke-width="1.9"></path></svg>
<svg class="a" style="left:613px;top:426.75px;" width="23" height="30" viewBox="0 0 23 30"><path d="M0 6H3.9V30H8.4V6H12.2L6.1 0Z" fill="#121e30"></path><path d="M14.9 0H19.1V23.7H22.8L16.9 30L10.9 23.7H14.9Z" fill="#121e30"></path></svg>
<span class="t" style="left: 695px; top: 429.26px; font-size: 15.7px; line-height: 20px; color: rgb(74, 74, 74); transform: scaleX(0.9051);">UNIVERSIDAD AUTONOMA</span>
<span class="t" style="left: 745.5px; top: 451.96px; font-size: 15.7px; line-height: 20px; color: rgb(74, 74, 74); transform: scaleX(0.863);">DE CHIAPAS</span>
<span class="t" style="left: 901.5px; top: 430.26px; font-size: 15.7px; line-height: 20px; color: rgb(52, 102, 160); transform: scaleX(0.926);">UAC750417LE8</span>
<span class="t" style="left: 1058.75px; top: 429.26px; font-size: 15.7px; line-height: 20px; color: rgb(74, 74, 74); transform: scaleX(0.9315);">F / 800</span>
<span class="t" style="left: 1164.7px; top: 429.26px; font-size: 15.7px; line-height: 20px; color: rgb(74, 74, 74); transform: scaleX(0.9267);">1,000.00</span>
<span class="t" style="left: 1296.45px; top: 429.26px; font-size: 15.7px; line-height: 20px; color: rgb(74, 74, 74); transform: scaleX(0.942);">Factura</span>
<span class="t" style="left: 1429.3px; top: 429.26px; font-size: 15.7px; line-height: 20px; color: rgb(74, 74, 74); transform: scaleX(0.9432);">2023-10-04 00:56:00</span>
<div class="a" style="left:1617px;top:428.75px;width:59px;height:22px;background:#74b85c;border-radius:3px;"></div>
<span class="t" style="left: 1623.35px; top: 431.75px; font-size: 13px; line-height: 16px; color: rgb(255, 255, 255); font-weight: bold; transform: scaleX(0.9696);">Vigente</span>
<div class="a" style="left:1730px;top:428.75px;width:24px;height:22px;background:#74b85c;border-radius:3px;"></div>
<span class="t" style="left: 1736.3px; top: 431.75px; font-size: 13px; line-height: 16px; color: rgb(255, 255, 255); font-weight: bold; transform: scaleX(0.9271);">SI</span>
<span class="t" style="left: 1806.8px; top: 429.26px; font-size: 15.7px; line-height: 20px; color: rgb(74, 74, 74); transform: scaleX(1.0062);">admin</span>
<div class="a" style="left:41px;top:492.50px;width:1817px;height:74.75px;background:#f9f9f9;"></div>
<div class="a" style="left:41px;top:491.5px;width:1817px;height:1px;background:#ebebeb;"></div>
<div class="a" style="left:71px;top:505.5px;width:11px;height:11px;background:#fff;border:1px solid #767676;border-radius:2px;"></div>
<svg class="a" style="left:122px;top:502.5px;" width="26" height="26" viewBox="0 0 26 26"><rect width="26" height="26" rx="5" fill="#03a9f4"></rect><circle cx="8.5" cy="13.2" r="3.6" fill="#fff"></circle><circle cx="18.4" cy="7.9" r="3.6" fill="#fff"></circle><circle cx="18.4" cy="18.3" r="3.6" fill="#fff"></circle><path d="M8.5 13.2L18.4 7.9M8.5 13.2L18.4 18.3" stroke="#fff" stroke-width="2.4"></path></svg>
<svg class="a" style="left:160px;top:495.5px;" width="40" height="40" viewBox="0 0 40 40"><g fill="#74b95a"><path d="M10.1 11.5L13.6 5.9Q14.5 5 15.8 5.2L18.3 5.3L19.9 8.1L15.3 15.1Z"></path><path d="M18.5 5.2L25.4 5.2Q27 5.4 27.8 6.8L28.6 8.9L30.8 8L27.4 13.9L21.1 13.7L22.6 12.3L19.9 7.9Z"></path><path d="M25.8 16.7L29.8 13.9Q30.6 13.5 31.2 14.4L34.6 19.5Q35 21 34.2 21.8L31 23.4Z"></path><path d="M33 23.8L29.8 30Q29.4 30.7 28.4 30.8L24.8 30.8L24.6 33.4L21.1 27.4L24.4 22.2L24.6 24.2L31.5 24.2Z"></path><path d="M9.7 24.2L18.9 25L18.9 31L11.5 30.6Q9.9 30.3 9.6 28.5Z"></path><path d="M6 15.1L13.1 15.3L15.1 20.7L13.1 20.2L8.5 26.2L5.5 21Q5 20 5.6 18.8L7.2 16.3Z"></path></g></svg>
<svg class="a" style="left:212px;top:495.5px;" width="40" height="40" viewBox="0 0 40 40"><path d="M9.9 6H24.8L32.5 13.6V33Q32.5 34.1 31.4 34.1H9.9Q8.85 34.1 8.85 33V7Q8.85 6 9.9 6Z" fill="none" stroke="#f00" stroke-width="1.9"></path><path d="M24 6V13.6Q24 14.6 25 14.6H32.5" fill="none" stroke="#f00" stroke-width="1.9"></path><path d="M19.6 14.3C19.4 16.5 19.6 18.5 20 20.2C18.8 24 16.5 28 13.2 30M20 20.2C21 22.5 22.5 24 24.5 24.8C26 25.2 28.2 25 28.5 25.5M17.8 25.6C20 25 22.5 24.7 24.5 24.8" fill="none" stroke="#f00" stroke-width="1.3"></path><circle cx="13.7" cy="29.5" r="1.2" fill="#f00"></circle><circle cx="28" cy="25.3" r="0.9" fill="#f00"></circle></svg>
<div class="a" style="left:213px;top:533.5px;width:39px;height:25px;background:#cbc9f0;border-radius:5px;"></div>
<span class="t" style="left: 221px; top: 536.8px; font-size: 15px; line-height: 19px; color: rgb(58, 106, 160); transform: scaleX(1.0215);">Ver</span>
<svg class="a" style="left:270px;top:500.5px;" width="31" height="31" viewBox="0 0 31 31"><path d="M6.6 22.5H3.2Q1 22.5 1 20.3V3.2Q1 1 3.2 1H20.3Q22.5 1 22.5 3.2V6.6" fill="none" stroke="#2c5f9c" stroke-width="2.1"></path><rect x="7.95" y="7.95" width="21.2" height="21" rx="2.5" fill="none" stroke="#2c5f9c" stroke-width="2.1"></rect></svg>
<svg class="a" style="left:317px;top:500.5px;" width="26" height="30.5" viewBox="0 0 26 30.5"><path d="M2.2 1.2H16.8L24.8 8.9V28Q24.8 29 23.8 29H2.2Q1.2 29 1.2 28V2.2Q1.2 1.2 2.2 1.2Z" fill="none" stroke="#5f5f5f" stroke-width="2"></path><path d="M16 1.2V9.2Q16 10 16.8 10H24.8" fill="none" stroke="#5f5f5f" stroke-width="2"></path><path d="M8.9 13.7L4.5 18.4L8.9 23.2M16.8 13.7L21.2 18.4L16.8 23.2M14.3 11.5L11.7 25.4" fill="none" stroke="#5f5f5f" stroke-width="1.9"></path></svg>
<svg class="a" style="left:359px;top:504.5px;" width="31" height="24" viewBox="0 0 31 24"><path d="M0 3Q0 0 3 0H28Q31 0 31 3Q31 5 28.5 7L15.5 16L2.5 7Q0 5 0 3Z" fill="#229de6"></path><path d="M0 8.5L15.5 19L31 8.5V21Q31 24 28 24H3Q0 24 0 21Z" fill="#229de6"></path></svg>
<svg class="a" style="left:434px;top:502.5px;" width="26" height="26" viewBox="0 0 26 26"><circle cx="13" cy="13" r="11.2" fill="none" stroke="#f00" stroke-width="3.6"></circle><path d="M20.5 5.5L5.5 20.5" stroke="#f00" stroke-width="3.6"></path></svg>
<svg class="a" style="left:517px;top:500.5px;" width="26" height="30" viewBox="0 0 26 30"><path d="M0.8 0Q0 0 0 1V29.3Q0 30 0.8 30H25Q26 30 26 29V10.2H15V0Z" fill="#121e30"></path><path d="M17 0.8L26 9.3H17Z" fill="#121e30"></path><path d="M6.2 14h13.6M6.2 18.5h13.6M6.2 23h13.6" stroke="#fff" stroke-width="1.9"></path></svg>
<svg class="a" style="left:613px;top:501.5px;" width="23" height="30" viewBox="0 0 23 30"><path d="M0 6H3.9V30H8.4V6H12.2L6.1 0Z" fill="#121e30"></path><path d="M14.9 0H19.1V23.7H22.8L16.9 30L10.9 23.7H14.9Z" fill="#121e30"></path></svg>
<span class="t" style="left: 724px; top: 504.01px; font-size: 15.7px; line-height: 20px; color: rgb(74, 74, 74); transform: scaleX(0.9739);">Paddle Market Ltd</span>
<span class="t" style="left: 898.65px; top: 505.01px; font-size: 15.7px; line-height: 20px; color: rgb(52, 102, 160); transform: scaleX(0.9195);">XEXX010101000</span>
<span class="t" style="left: 1058.75px; top: 504.01px; font-size: 15.7px; line-height: 20px; color: rgb(74, 74, 74); transform: scaleX(0.9315);">F / 797</span>
<span class="t" style="left: 1164.7px; top: 504.01px; font-size: 15.7px; line-height: 20px; color: rgb(74, 74, 74); transform: scaleX(0.9267);">1,160.00</span>
<span class="t" style="left: 1296.45px; top: 504.01px; font-size: 15.7px; line-height: 20px; color: rgb(74, 74, 74); transform: scaleX(0.942);">Factura</span>
<span class="t" style="left: 1429.3px; top: 504.01px; font-size: 15.7px; line-height: 20px; color: rgb(74, 74, 74); transform: scaleX(0.9432);">2023-10-04 00:37:00</span>
<div class="a" style="left:1617px;top:503.5px;width:59px;height:22px;background:#74b85c;border-radius:3px;"></div>
<span class="t" style="left: 1623.35px; top: 506.5px; font-size: 13px; line-height: 16px; color: rgb(255, 255, 255); font-weight: bold; transform: scaleX(0.9696);">Vigente</span>
<div class="a" style="left:1730px;top:503.5px;width:24px;height:22px;background:#74b85c;border-radius:3px;"></div>
<span class="t" style="left: 1736.3px; top: 506.5px; font-size: 13px; line-height: 16px; color: rgb(255, 255, 255); font-weight: bold; transform: scaleX(0.9271);">SI</span>
<span class="t" style="left: 1806.8px; top: 504.01px; font-size: 15.7px; line-height: 20px; color: rgb(74, 74, 74); transform: scaleX(1.0062);">admin</span>
<div class="a" style="left:41px;top:567.25px;width:1817px;height:74.75px;background:#fff;"></div>
<div class="a" style="left:41px;top:566.5px;width:1817px;height:1px;background:#ebebeb;"></div>
<div class="a" style="left:71px;top:580.25px;width:11px;height:11px;background:#fff;border:1px solid #767676;border-radius:2px;"></div>
<svg class="a" style="left:122px;top:577.25px;" width="26" height="26" viewBox="0 0 26 26"><rect width="26" height="26" rx="5" fill="#03a9f4"></rect><circle cx="8.5" cy="13.2" r="3.6" fill="#fff"></circle><circle cx="18.4" cy="7.9" r="3.6" fill="#fff"></circle><circle cx="18.4" cy="18.3" r="3.6" fill="#fff"></circle><path d="M8.5 13.2L18.4 7.9M8.5 13.2L18.4 18.3" stroke="#fff" stroke-width="2.4"></path></svg>
<svg class="a" style="left:160px;top:570.25px;" width="40" height="40" viewBox="0 0 40 40"><g fill="#74b95a"><path d="M10.1 11.5L13.6 5.9Q14.5 5 15.8 5.2L18.3 5.3L19.9 8.1L15.3 15.1Z"></path><path d="M18.5 5.2L25.4 5.2Q27 5.4 27.8 6.8L28.6 8.9L30.8 8L27.4 13.9L21.1 13.7L22.6 12.3L19.9 7.9Z"></path><path d="M25.8 16.7L29.8 13.9Q30.6 13.5 31.2 14.4L34.6 19.5Q35 21 34.2 21.8L31 23.4Z"></path><path d="M33 23.8L29.8 30Q29.4 30.7 28.4 30.8L24.8 30.8L24.6 33.4L21.1 27.4L24.4 22.2L24.6 24.2L31.5 24.2Z"></path><path d="M9.7 24.2L18.9 25L18.9 31L11.5 30.6Q9.9 30.3 9.6 28.5Z"></path><path d="M6 15.1L13.1 15.3L15.1 20.7L13.1 20.2L8.5 26.2L5.5 21Q5 20 5.6 18.8L7.2 16.3Z"></path></g></svg>
<svg class="a" style="left:212px;top:570.25px;" width="40" height="40" viewBox="0 0 40 40"><path d="M9.9 6H24.8L32.5 13.6V33Q32.5 34.1 31.4 34.1H9.9Q8.85 34.1 8.85 33V7Q8.85 6 9.9 6Z" fill="none" stroke="#f00" stroke-width="1.9"></path><path d="M24 6V13.6Q24 14.6 25 14.6H32.5" fill="none" stroke="#f00" stroke-width="1.9"></path><path d="M19.6 14.3C19.4 16.5 19.6 18.5 20 20.2C18.8 24 16.5 28 13.2 30M20 20.2C21 22.5 22.5 24 24.5 24.8C26 25.2 28.2 25 28.5 25.5M17.8 25.6C20 25 22.5 24.7 24.5 24.8" fill="none" stroke="#f00" stroke-width="1.3"></path><circle cx="13.7" cy="29.5" r="1.2" fill="#f00"></circle><circle cx="28" cy="25.3" r="0.9" fill="#f00"></circle></svg>
<div class="a" style="left:213px;top:608.25px;width:39px;height:25px;background:#cbc9f0;border-radius:5px;"></div>
<span class="t" style="left: 221px; top: 611.55px; font-size: 15px; line-height: 19px; color: rgb(58, 106, 160); transform: scaleX(1.0215);">Ver</span>
<svg class="a" style="left:270px;top:575.25px;" width="31" height="31" viewBox="0 0 31 31"><path d="M6.6 22.5H3.2Q1 22.5 1 20.3V3.2Q1 1 3.2 1H20.3Q22.5 1 22.5 3.2V6.6" fill="none" stroke="#2c5f9c" stroke-width="2.1"></path><rect x="7.95" y="7.95" width="21.2" height="21" rx="2.5" fill="none" stroke="#2c5f9c" stroke-width="2.1"></rect></svg>
<svg class="a" style="left:317px;top:575.25px;" width="26" height="30.5" viewBox="0 0 26 30.5"><path d="M2.2 1.2H16.8L24.8 8.9V28Q24.8 29 23.8 29H2.2Q1.2 29 1.2 28V2.2Q1.2 1.2 2.2 1.2Z" fill="none" stroke="#5f5f5f" stroke-width="2"></path><path d="M16 1.2V9.2Q16 10 16.8 10H24.8" fill="none" stroke="#5f5f5f" stroke-width="2"></path><path d="M8.9 13.7L4.5 18.4L8.9 23.2M16.8 13.7L21.2 18.4L16.8 23.2M14.3 11.5L11.7 25.4" fill="none" stroke="#5f5f5f" stroke-width="1.9"></path></svg>
<svg class="a" style="left:359px;top:579.25px;" width="31" height="24" viewBox="0 0 31 24"><path d="M0 3Q0 0 3 0H28Q31 0 31 3Q31 5 28.5 7L15.5 16L2.5 7Q0 5 0 3Z" fill="#229de6"></path><path d="M0 8.5L15.5 19L31 8.5V21Q31 24 28 24H3Q0 24 0 21Z" fill="#229de6"></path></svg>
<svg class="a" style="left:434px;top:577.25px;" width="26" height="26" viewBox="0 0 26 26"><circle cx="13" cy="13" r="11.2" fill="none" stroke="#f00" stroke-width="3.6"></circle><path d="M20.5 5.5L5.5 20.5" stroke="#f00" stroke-width="3.6"></path></svg>
<svg class="a" style="left:517px;top:575.25px;" width="26" height="30" viewBox="0 0 26 30"><path d="M0.8 0Q0 0 0 1V29.3Q0 30 0.8 30H25Q26 30 26 29V10.2H15V0Z" fill="#121e30"></path><path d="M17 0.8L26 9.3H17Z" fill="#121e30"></path><path d="M6.2 14h13.6M6.2 18.5h13.6M6.2 23h13.6" stroke="#fff" stroke-width="1.9"></path></svg>
<svg class="a" style="left:613px;top:576.25px;" width="23" height="30" viewBox="0 0 23 30"><path d="M0 6H3.9V30H8.4V6H12.2L6.1 0Z" fill="#121e30"></path><path d="M14.9 0H19.1V23.7H22.8L16.9 30L10.9 23.7H14.9Z" fill="#121e30"></path></svg>
<span class="t" style="left: 695px; top: 578.76px; font-size: 15.7px; line-height: 20px; color: rgb(74, 74, 74); transform: scaleX(0.9051);">UNIVERSIDAD AUTONOMA</span>
<span class="t" style="left: 745.5px; top: 601.46px; font-size: 15.7px; line-height: 20px; color: rgb(74, 74, 74); transform: scaleX(0.863);">DE CHIAPAS</span>
<span class="t" style="left: 901.5px; top: 579.76px; font-size: 15.7px; line-height: 20px; color: rgb(52, 102, 160); transform: scaleX(0.926);">UAC750417LE8</span>
<span class="t" style="left: 1058.75px; top: 578.76px; font-size: 15.7px; line-height: 20px; color: rgb(74, 74, 74); transform: scaleX(0.9315);">F / 798</span>
<span class="t" style="left: 1164.7px; top: 578.76px; font-size: 15.7px; line-height: 20px; color: rgb(74, 74, 74); transform: scaleX(0.9267);">1,000.00</span>
<span class="t" style="left: 1296.45px; top: 578.76px; font-size: 15.7px; line-height: 20px; color: rgb(74, 74, 74); transform: scaleX(0.942);">Factura</span>
<span class="t" style="left: 1429.3px; top: 578.76px; font-size: 15.7px; line-height: 20px; color: rgb(74, 74, 74); transform: scaleX(0.9432);">2023-10-04 00:37:00</span>
<div class="a" style="left:1617px;top:578.25px;width:59px;height:22px;background:#74b85c;border-radius:3px;"></div>
<span class="t" style="left: 1623.35px; top: 581.25px; font-size: 13px; line-height: 16px; color: rgb(255, 255, 255); font-weight: bold; transform: scaleX(0.9696);">Vigente</span>
<div class="a" style="left:1730px;top:578.25px;width:24px;height:22px;background:#74b85c;border-radius:3px;"></div>
<span class="t" style="left: 1736.3px; top: 581.25px; font-size: 13px; line-height: 16px; color: rgb(255, 255, 255); font-weight: bold; transform: scaleX(0.9271);">SI</span>
<span class="t" style="left: 1806.8px; top: 578.76px; font-size: 15.7px; line-height: 20px; color: rgb(74, 74, 74); transform: scaleX(1.0062);">admin</span>
<div class="a" style="left:41px;top:642.00px;width:1817px;height:74.75px;background:#f9f9f9;"></div>
<div class="a" style="left:41px;top:641.5px;width:1817px;height:1px;background:#ebebeb;"></div>
<div class="a" style="left:71px;top:655.0px;width:11px;height:11px;background:#fff;border:1px solid #767676;border-radius:2px;"></div>
<svg class="a" style="left:122px;top:652.0px;" width="26" height="26" viewBox="0 0 26 26"><rect width="26" height="26" rx="5" fill="#03a9f4"></rect><circle cx="8.5" cy="13.2" r="3.6" fill="#fff"></circle><circle cx="18.4" cy="7.9" r="3.6" fill="#fff"></circle><circle cx="18.4" cy="18.3" r="3.6" fill="#fff"></circle><path d="M8.5 13.2L18.4 7.9M8.5 13.2L18.4 18.3" stroke="#fff" stroke-width="2.4"></path></svg>
<svg class="a" style="left:160px;top:645.0px;" width="40" height="40" viewBox="0 0 40 40"><g fill="#74b95a"><path d="M10.1 11.5L13.6 5.9Q14.5 5 15.8 5.2L18.3 5.3L19.9 8.1L15.3 15.1Z"></path><path d="M18.5 5.2L25.4 5.2Q27 5.4 27.8 6.8L28.6 8.9L30.8 8L27.4 13.9L21.1 13.7L22.6 12.3L19.9 7.9Z"></path><path d="M25.8 16.7L29.8 13.9Q30.6 13.5 31.2 14.4L34.6 19.5Q35 21 34.2 21.8L31 23.4Z"></path><path d="M33 23.8L29.8 30Q29.4 30.7 28.4 30.8L24.8 30.8L24.6 33.4L21.1 27.4L24.4 22.2L24.6 24.2L31.5 24.2Z"></path><path d="M9.7 24.2L18.9 25L18.9 31L11.5 30.6Q9.9 30.3 9.6 28.5Z"></path><path d="M6 15.1L13.1 15.3L15.1 20.7L13.1 20.2L8.5 26.2L5.5 21Q5 20 5.6 18.8L7.2 16.3Z"></path></g></svg>
<svg class="a" style="left:212px;top:645.0px;" width="40" height="40" viewBox="0 0 40 40"><path d="M9.9 6H24.8L32.5 13.6V33Q32.5 34.1 31.4 34.1H9.9Q8.85 34.1 8.85 33V7Q8.85 6 9.9 6Z" fill="none" stroke="#f00" stroke-width="1.9"></path><path d="M24 6V13.6Q24 14.6 25 14.6H32.5" fill="none" stroke="#f00" stroke-width="1.9"></path><path d="M19.6 14.3C19.4 16.5 19.6 18.5 20 20.2C18.8 24 16.5 28 13.2 30M20 20.2C21 22.5 22.5 24 24.5 24.8C26 25.2 28.2 25 28.5 25.5M17.8 25.6C20 25 22.5 24.7 24.5 24.8" fill="none" stroke="#f00" stroke-width="1.3"></path><circle cx="13.7" cy="29.5" r="1.2" fill="#f00"></circle><circle cx="28" cy="25.3" r="0.9" fill="#f00"></circle></svg>
<div class="a" style="left:213px;top:683.0px;width:39px;height:25px;background:#cbc9f0;border-radius:5px;"></div>
<span class="t" style="left: 221px; top: 686.3px; font-size: 15px; line-height: 19px; color: rgb(58, 106, 160); transform: scaleX(1.0215);">Ver</span>
<svg class="a" style="left:270px;top:650.0px;" width="31" height="31" viewBox="0 0 31 31"><path d="M6.6 22.5H3.2Q1 22.5 1 20.3V3.2Q1 1 3.2 1H20.3Q22.5 1 22.5 3.2V6.6" fill="none" stroke="#2c5f9c" stroke-width="2.1"></path><rect x="7.95" y="7.95" width="21.2" height="21" rx="2.5" fill="none" stroke="#2c5f9c" stroke-width="2.1"></rect></svg>
<svg class="a" style="left:317px;top:650.0px;" width="26" height="30.5" viewBox="0 0 26 30.5"><path d="M2.2 1.2H16.8L24.8 8.9V28Q24.8 29 23.8 29H2.2Q1.2 29 1.2 28V2.2Q1.2 1.2 2.2 1.2Z" fill="none" stroke="#5f5f5f" stroke-width="2"></path><path d="M16 1.2V9.2Q16 10 16.8 10H24.8" fill="none" stroke="#5f5f5f" stroke-width="2"></path><path d="M8.9 13.7L4.5 18.4L8.9 23.2M16.8 13.7L21.2 18.4L16.8 23.2M14.3 11.5L11.7 25.4" fill="none" stroke="#5f5f5f" stroke-width="1.9"></path></svg>
<svg class="a" style="left:359px;top:654.0px;" width="31" height="24" viewBox="0 0 31 24"><path d="M0 3Q0 0 3 0H28Q31 0 31 3Q31 5 28.5 7L15.5 16L2.5 7Q0 5 0 3Z" fill="#229de6"></path><path d="M0 8.5L15.5 19L31 8.5V21Q31 24 28 24H3Q0 24 0 21Z" fill="#229de6"></path></svg>
<svg class="a" style="left:434px;top:652.0px;" width="26" height="26" viewBox="0 0 26 26"><circle cx="13" cy="13" r="11.2" fill="none" stroke="#f00" stroke-width="3.6"></circle><path d="M20.5 5.5L5.5 20.5" stroke="#f00" stroke-width="3.6"></path></svg>
<svg class="a" style="left:517px;top:650.0px;" width="26" height="30" viewBox="0 0 26 30"><path d="M0.8 0Q0 0 0 1V29.3Q0 30 0.8 30H25Q26 30 26 29V10.2H15V0Z" fill="#121e30"></path><path d="M17 0.8L26 9.3H17Z" fill="#121e30"></path><path d="M6.2 14h13.6M6.2 18.5h13.6M6.2 23h13.6" stroke="#fff" stroke-width="1.9"></path></svg>
<svg class="a" style="left:613px;top:651.0px;" width="23" height="30" viewBox="0 0 23 30"><path d="M0 6H3.9V30H8.4V6H12.2L6.1 0Z" fill="#121e30"></path><path d="M14.9 0H19.1V23.7H22.8L16.9 30L10.9 23.7H14.9Z" fill="#121e30"></path></svg>
<span class="t" style="left: 722.2px; top: 653.51px; font-size: 15.7px; line-height: 20px; color: rgb(74, 74, 74); transform: scaleX(0.9563);">Publico en General</span>
<span class="t" style="left: 898px; top: 654.51px; font-size: 15.7px; line-height: 20px; color: rgb(52, 102, 160); transform: scaleX(0.9303);">XAXX010101000</span>
<span class="t" style="left: 1058.75px; top: 653.51px; font-size: 15.7px; line-height: 20px; color: rgb(74, 74, 74); transform: scaleX(0.9315);">F / 793</span>
<span class="t" style="left: 1170.3px; top: 653.51px; font-size: 15.7px; line-height: 20px; color: rgb(74, 74, 74); transform: scaleX(0.9461);">212.00</span>
<span class="t" style="left: 1268px; top: 653.51px; font-size: 15.7px; line-height: 20px; color: rgb(74, 74, 74); transform: scaleX(0.9738);">Nota de Crédito</span>
<span class="t" style="left: 1429.3px; top: 653.51px; font-size: 15.7px; line-height: 20px; color: rgb(74, 74, 74); transform: scaleX(0.9432);">2023-10-04 00:34:00</span>
<div class="a" style="left:1617px;top:653.0px;width:59px;height:22px;background:#74b85c;border-radius:3px;"></div>
<span class="t" style="left: 1623.35px; top: 656px; font-size: 13px; line-height: 16px; color: rgb(255, 255, 255); font-weight: bold; transform: scaleX(0.9696);">Vigente</span>
<div class="a" style="left:1730px;top:653.0px;width:24px;height:22px;background:#74b85c;border-radius:3px;"></div>
<span class="t" style="left: 1736.3px; top: 656px; font-size: 13px; line-height: 16px; color: rgb(255, 255, 255); font-weight: bold; transform: scaleX(0.9271);">SI</span>
<span class="t" style="left: 1806.8px; top: 653.51px; font-size: 15.7px; line-height: 20px; color: rgb(74, 74, 74); transform: scaleX(1.0062);">admin</span>
<div class="a" style="left:41px;top:716.75px;width:1817px;height:74.75px;background:#fff;"></div>
<div class="a" style="left:41px;top:716.5px;width:1817px;height:1px;background:#ebebeb;"></div>
<div class="a" style="left:71px;top:729.75px;width:11px;height:11px;background:#fff;border:1px solid #767676;border-radius:2px;"></div>
<svg class="a" style="left:122px;top:726.75px;" width="26" height="26" viewBox="0 0 26 26"><rect width="26" height="26" rx="5" fill="#03a9f4"></rect><circle cx="8.5" cy="13.2" r="3.6" fill="#fff"></circle><circle cx="18.4" cy="7.9" r="3.6" fill="#fff"></circle><circle cx="18.4" cy="18.3" r="3.6" fill="#fff"></circle><path d="M8.5 13.2L18.4 7.9M8.5 13.2L18.4 18.3" stroke="#fff" stroke-width="2.4"></path></svg>
<svg class="a" style="left:160px;top:719.75px;" width="40" height="40" viewBox="0 0 40 40"><g fill="#74b95a"><path d="M10.1 11.5L13.6 5.9Q14.5 5 15.8 5.2L18.3 5.3L19.9 8.1L15.3 15.1Z"></path><path d="M18.5 5.2L25.4 5.2Q27 5.4 27.8 6.8L28.6 8.9L30.8 8L27.4 13.9L21.1 13.7L22.6 12.3L19.9 7.9Z"></path><path d="M25.8 16.7L29.8 13.9Q30.6 13.5 31.2 14.4L34.6 19.5Q35 21 34.2 21.8L31 23.4Z"></path><path d="M33 23.8L29.8 30Q29.4 30.7 28.4 30.8L24.8 30.8L24.6 33.4L21.1 27.4L24.4 22.2L24.6 24.2L31.5 24.2Z"></path><path d="M9.7 24.2L18.9 25L18.9 31L11.5 30.6Q9.9 30.3 9.6 28.5Z"></path><path d="M6 15.1L13.1 15.3L15.1 20.7L13.1 20.2L8.5 26.2L5.5 21Q5 20 5.6 18.8L7.2 16.3Z"></path></g></svg>
<svg class="a" style="left:212px;top:719.75px;" width="40" height="40" viewBox="0 0 40 40"><path d="M9.9 6H24.8L32.5 13.6V33Q32.5 34.1 31.4 34.1H9.9Q8.85 34.1 8.85 33V7Q8.85 6 9.9 6Z" fill="none" stroke="#f00" stroke-width="1.9"></path><path d="M24 6V13.6Q24 14.6 25 14.6H32.5" fill="none" stroke="#f00" stroke-width="1.9"></path><path d="M19.6 14.3C19.4 16.5 19.6 18.5 20 20.2C18.8 24 16.5 28 13.2 30M20 20.2C21 22.5 22.5 24 24.5 24.8C26 25.2 28.2 25 28.5 25.5M17.8 25.6C20 25 22.5 24.7 24.5 24.8" fill="none" stroke="#f00" stroke-width="1.3"></path><circle cx="13.7" cy="29.5" r="1.2" fill="#f00"></circle><circle cx="28" cy="25.3" r="0.9" fill="#f00"></circle></svg>
<div class="a" style="left:213px;top:757.75px;width:39px;height:25px;background:#cbc9f0;border-radius:5px;"></div>
<span class="t" style="left: 221px; top: 761.05px; font-size: 15px; line-height: 19px; color: rgb(58, 106, 160); transform: scaleX(1.0215);">Ver</span>
<svg class="a" style="left:270px;top:724.75px;" width="31" height="31" viewBox="0 0 31 31"><path d="M6.6 22.5H3.2Q1 22.5 1 20.3V3.2Q1 1 3.2 1H20.3Q22.5 1 22.5 3.2V6.6" fill="none" stroke="#2c5f9c" stroke-width="2.1"></path><rect x="7.95" y="7.95" width="21.2" height="21" rx="2.5" fill="none" stroke="#2c5f9c" stroke-width="2.1"></rect></svg>
<svg class="a" style="left:317px;top:724.75px;" width="26" height="30.5" viewBox="0 0 26 30.5"><path d="M2.2 1.2H16.8L24.8 8.9V28Q24.8 29 23.8 29H2.2Q1.2 29 1.2 28V2.2Q1.2 1.2 2.2 1.2Z" fill="none" stroke="#5f5f5f" stroke-width="2"></path><path d="M16 1.2V9.2Q16 10 16.8 10H24.8" fill="none" stroke="#5f5f5f" stroke-width="2"></path><path d="M8.9 13.7L4.5 18.4L8.9 23.2M16.8 13.7L21.2 18.4L16.8 23.2M14.3 11.5L11.7 25.4" fill="none" stroke="#5f5f5f" stroke-width="1.9"></path></svg>
<svg class="a" style="left:359px;top:728.75px;" width="31" height="24" viewBox="0 0 31 24"><path d="M0 3Q0 0 3 0H28Q31 0 31 3Q31 5 28.5 7L15.5 16L2.5 7Q0 5 0 3Z" fill="#229de6"></path><path d="M0 8.5L15.5 19L31 8.5V21Q31 24 28 24H3Q0 24 0 21Z" fill="#229de6"></path></svg>
<svg class="a" style="left:434px;top:726.75px;" width="26" height="26" viewBox="0 0 26 26"><circle cx="13" cy="13" r="11.2" fill="none" stroke="#f00" stroke-width="3.6"></circle><path d="M20.5 5.5L5.5 20.5" stroke="#f00" stroke-width="3.6"></path></svg>
<svg class="a" style="left:517px;top:724.75px;" width="26" height="30" viewBox="0 0 26 30"><path d="M0.8 0Q0 0 0 1V29.3Q0 30 0.8 30H25Q26 30 26 29V10.2H15V0Z" fill="#121e30"></path><path d="M17 0.8L26 9.3H17Z" fill="#121e30"></path><path d="M6.2 14h13.6M6.2 18.5h13.6M6.2 23h13.6" stroke="#fff" stroke-width="1.9"></path></svg>
<svg class="a" style="left:613px;top:725.75px;" width="23" height="30" viewBox="0 0 23 30"><path d="M0 6H3.9V30H8.4V6H12.2L6.1 0Z" fill="#121e30"></path><path d="M14.9 0H19.1V23.7H22.8L16.9 30L10.9 23.7H14.9Z" fill="#121e30"></path></svg>
<span class="t" style="left: 722.2px; top: 728.26px; font-size: 15.7px; line-height: 20px; color: rgb(74, 74, 74); transform: scaleX(0.9563);">Publico en General</span>
<span class="t" style="left: 898px; top: 729.26px; font-size: 15.7px; line-height: 20px; color: rgb(52, 102, 160); transform: scaleX(0.9303);">XAXX010101000</span>
<span class="t" style="left: 1058.75px; top: 728.26px; font-size: 15.7px; line-height: 20px; color: rgb(74, 74, 74); transform: scaleX(0.9315);">F / 794</span>
<span class="t" style="left: 1170.3px; top: 728.26px; font-size: 15.7px; line-height: 20px; color: rgb(74, 74, 74); transform: scaleX(0.9461);">229.00</span>
<span class="t" style="left: 1268px; top: 728.26px; font-size: 15.7px; line-height: 20px; color: rgb(74, 74, 74); transform: scaleX(0.9738);">Nota de Crédito</span>
<span class="t" style="left: 1429.3px; top: 728.26px; font-size: 15.7px; line-height: 20px; color: rgb(74, 74, 74); transform: scaleX(0.9432);">2023-10-04 00:34:00</span>
<div class="a" style="left:1617px;top:727.75px;width:59px;height:22px;background:#74b85c;border-radius:3px;"></div>
<span class="t" style="left: 1623.35px; top: 730.75px; font-size: 13px; line-height: 16px; color: rgb(255, 255, 255); font-weight: bold; transform: scaleX(0.9696);">Vigente</span>
<div class="a" style="left:1730px;top:727.75px;width:24px;height:22px;background:#74b85c;border-radius:3px;"></div>
<span class="t" style="left: 1736.3px; top: 730.75px; font-size: 13px; line-height: 16px; color: rgb(255, 255, 255); font-weight: bold; transform: scaleX(0.9271);">SI</span>
<span class="t" style="left: 1806.8px; top: 728.26px; font-size: 15.7px; line-height: 20px; color: rgb(74, 74, 74); transform: scaleX(1.0062);">admin</span>
<div class="a" style="left:41px;top:791.50px;width:1817px;height:74.75px;background:#f9f9f9;"></div>
<div class="a" style="left:41px;top:791.5px;width:1817px;height:1px;background:#ebebeb;"></div>
<div class="a" style="left:71px;top:804.5px;width:11px;height:11px;background:#fff;border:1px solid #767676;border-radius:2px;"></div>
<svg class="a" style="left:122px;top:801.5px;" width="26" height="26" viewBox="0 0 26 26"><rect width="26" height="26" rx="5" fill="#03a9f4"></rect><circle cx="8.5" cy="13.2" r="3.6" fill="#fff"></circle><circle cx="18.4" cy="7.9" r="3.6" fill="#fff"></circle><circle cx="18.4" cy="18.3" r="3.6" fill="#fff"></circle><path d="M8.5 13.2L18.4 7.9M8.5 13.2L18.4 18.3" stroke="#fff" stroke-width="2.4"></path></svg>
<svg class="a" style="left:160px;top:794.5px;" width="40" height="40" viewBox="0 0 40 40"><g fill="#74b95a"><path d="M10.1 11.5L13.6 5.9Q14.5 5 15.8 5.2L18.3 5.3L19.9 8.1L15.3 15.1Z"></path><path d="M18.5 5.2L25.4 5.2Q27 5.4 27.8 6.8L28.6 8.9L30.8 8L27.4 13.9L21.1 13.7L22.6 12.3L19.9 7.9Z"></path><path d="M25.8 16.7L29.8 13.9Q30.6 13.5 31.2 14.4L34.6 19.5Q35 21 34.2 21.8L31 23.4Z"></path><path d="M33 23.8L29.8 30Q29.4 30.7 28.4 30.8L24.8 30.8L24.6 33.4L21.1 27.4L24.4 22.2L24.6 24.2L31.5 24.2Z"></path><path d="M9.7 24.2L18.9 25L18.9 31L11.5 30.6Q9.9 30.3 9.6 28.5Z"></path><path d="M6 15.1L13.1 15.3L15.1 20.7L13.1 20.2L8.5 26.2L5.5 21Q5 20 5.6 18.8L7.2 16.3Z"></path></g></svg>
<svg class="a" style="left:212px;top:794.5px;" width="40" height="40" viewBox="0 0 40 40"><path d="M9.9 6H24.8L32.5 13.6V33Q32.5 34.1 31.4 34.1H9.9Q8.85 34.1 8.85 33V7Q8.85 6 9.9 6Z" fill="none" stroke="#f00" stroke-width="1.9"></path><path d="M24 6V13.6Q24 14.6 25 14.6H32.5" fill="none" stroke="#f00" stroke-width="1.9"></path><path d="M19.6 14.3C19.4 16.5 19.6 18.5 20 20.2C18.8 24 16.5 28 13.2 30M20 20.2C21 22.5 22.5 24 24.5 24.8C26 25.2 28.2 25 28.5 25.5M17.8 25.6C20 25 22.5 24.7 24.5 24.8" fill="none" stroke="#f00" stroke-width="1.3"></path><circle cx="13.7" cy="29.5" r="1.2" fill="#f00"></circle><circle cx="28" cy="25.3" r="0.9" fill="#f00"></circle></svg>
<div class="a" style="left:213px;top:832.5px;width:39px;height:25px;background:#cbc9f0;border-radius:5px;"></div>
<span class="t" style="left: 221px; top: 835.8px; font-size: 15px; line-height: 19px; color: rgb(58, 106, 160); transform: scaleX(1.0215);">Ver</span>
<svg class="a" style="left:270px;top:799.5px;" width="31" height="31" viewBox="0 0 31 31"><path d="M6.6 22.5H3.2Q1 22.5 1 20.3V3.2Q1 1 3.2 1H20.3Q22.5 1 22.5 3.2V6.6" fill="none" stroke="#2c5f9c" stroke-width="2.1"></path><rect x="7.95" y="7.95" width="21.2" height="21" rx="2.5" fill="none" stroke="#2c5f9c" stroke-width="2.1"></rect></svg>
<svg class="a" style="left:317px;top:799.5px;" width="26" height="30.5" viewBox="0 0 26 30.5"><path d="M2.2 1.2H16.8L24.8 8.9V28Q24.8 29 23.8 29H2.2Q1.2 29 1.2 28V2.2Q1.2 1.2 2.2 1.2Z" fill="none" stroke="#5f5f5f" stroke-width="2"></path><path d="M16 1.2V9.2Q16 10 16.8 10H24.8" fill="none" stroke="#5f5f5f" stroke-width="2"></path><path d="M8.9 13.7L4.5 18.4L8.9 23.2M16.8 13.7L21.2 18.4L16.8 23.2M14.3 11.5L11.7 25.4" fill="none" stroke="#5f5f5f" stroke-width="1.9"></path></svg>
<svg class="a" style="left:359px;top:803.5px;" width="31" height="24" viewBox="0 0 31 24"><path d="M0 3Q0 0 3 0H28Q31 0 31 3Q31 5 28.5 7L15.5 16L2.5 7Q0 5 0 3Z" fill="#229de6"></path><path d="M0 8.5L15.5 19L31 8.5V21Q31 24 28 24H3Q0 24 0 21Z" fill="#229de6"></path></svg>
<svg class="a" style="left:434px;top:801.5px;" width="26" height="26" viewBox="0 0 26 26"><circle cx="13" cy="13" r="11.2" fill="none" stroke="#f00" stroke-width="3.6"></circle><path d="M20.5 5.5L5.5 20.5" stroke="#f00" stroke-width="3.6"></path></svg>
<svg class="a" style="left:517px;top:799.5px;" width="26" height="30" viewBox="0 0 26 30"><path d="M0.8 0Q0 0 0 1V29.3Q0 30 0.8 30H25Q26 30 26 29V10.2H15V0Z" fill="#121e30"></path><path d="M17 0.8L26 9.3H17Z" fill="#121e30"></path><path d="M6.2 14h13.6M6.2 18.5h13.6M6.2 23h13.6" stroke="#fff" stroke-width="1.9"></path></svg>
<svg class="a" style="left:613px;top:800.5px;" width="23" height="30" viewBox="0 0 23 30"><path d="M0 6H3.9V30H8.4V6H12.2L6.1 0Z" fill="#121e30"></path><path d="M14.9 0H19.1V23.7H22.8L16.9 30L10.9 23.7H14.9Z" fill="#121e30"></path></svg>
<span class="t" style="left: 722.2px; top: 803.01px; font-size: 15.7px; line-height: 20px; color: rgb(74, 74, 74); transform: scaleX(0.9563);">Publico en General</span>
<span class="t" style="left: 898px; top: 804.01px; font-size: 15.7px; line-height: 20px; color: rgb(52, 102, 160); transform: scaleX(0.9303);">XAXX010101000</span>
<span class="t" style="left: 1058.75px; top: 803.01px; font-size: 15.7px; line-height: 20px; color: rgb(74, 74, 74); transform: scaleX(0.9315);">F / 795</span>
<span class="t" style="left: 1170.3px; top: 803.01px; font-size: 15.7px; line-height: 20px; color: rgb(74, 74, 74); transform: scaleX(0.9461);">275.00</span>
<span class="t" style="left: 1268px; top: 803.01px; font-size: 15.7px; line-height: 20px; color: rgb(74, 74, 74); transform: scaleX(0.9738);">Nota de Crédito</span>
<span class="t" style="left: 1429.3px; top: 803.01px; font-size: 15.7px; line-height: 20px; color: rgb(74, 74, 74); transform: scaleX(0.9432);">2023-10-04 00:34:00</span>
<div class="a" style="left:1617px;top:802.5px;width:59px;height:22px;background:#74b85c;border-radius:3px;"></div>
<span class="t" style="left: 1623.35px; top: 805.5px; font-size: 13px; line-height: 16px; color: rgb(255, 255, 255); font-weight: bold; transform: scaleX(0.9696);">Vigente</span>
<div class="a" style="left:1730px;top:802.5px;width:24px;height:22px;background:#74b85c;border-radius:3px;"></div>
<span class="t" style="left: 1736.3px; top: 805.5px; font-size: 13px; line-height: 16px; color: rgb(255, 255, 255); font-weight: bold; transform: scaleX(0.9271);">SI</span>
<span class="t" style="left: 1806.8px; top: 803.01px; font-size: 15.7px; line-height: 20px; color: rgb(74, 74, 74); transform: scaleX(1.0062);">admin</span>
<div class="a" style="left:41px;top:866.25px;width:1817px;height:74.75px;background:#fff;"></div>
<div class="a" style="left:41px;top:865.5px;width:1817px;height:1px;background:#ebebeb;"></div>
<div class="a" style="left:71px;top:879.25px;width:11px;height:11px;background:#fff;border:1px solid #767676;border-radius:2px;"></div>
<svg class="a" style="left:122px;top:876.25px;" width="26" height="26" viewBox="0 0 26 26"><rect width="26" height="26" rx="5" fill="#03a9f4"></rect><circle cx="8.5" cy="13.2" r="3.6" fill="#fff"></circle><circle cx="18.4" cy="7.9" r="3.6" fill="#fff"></circle><circle cx="18.4" cy="18.3" r="3.6" fill="#fff"></circle><path d="M8.5 13.2L18.4 7.9M8.5 13.2L18.4 18.3" stroke="#fff" stroke-width="2.4"></path></svg>
<svg class="a" style="left:160px;top:869.25px;" width="40" height="40" viewBox="0 0 40 40"><g fill="#74b95a"><path d="M10.1 11.5L13.6 5.9Q14.5 5 15.8 5.2L18.3 5.3L19.9 8.1L15.3 15.1Z"></path><path d="M18.5 5.2L25.4 5.2Q27 5.4 27.8 6.8L28.6 8.9L30.8 8L27.4 13.9L21.1 13.7L22.6 12.3L19.9 7.9Z"></path><path d="M25.8 16.7L29.8 13.9Q30.6 13.5 31.2 14.4L34.6 19.5Q35 21 34.2 21.8L31 23.4Z"></path><path d="M33 23.8L29.8 30Q29.4 30.7 28.4 30.8L24.8 30.8L24.6 33.4L21.1 27.4L24.4 22.2L24.6 24.2L31.5 24.2Z"></path><path d="M9.7 24.2L18.9 25L18.9 31L11.5 30.6Q9.9 30.3 9.6 28.5Z"></path><path d="M6 15.1L13.1 15.3L15.1 20.7L13.1 20.2L8.5 26.2L5.5 21Q5 20 5.6 18.8L7.2 16.3Z"></path></g></svg>
<svg class="a" style="left:212px;top:869.25px;" width="40" height="40" viewBox="0 0 40 40"><path d="M9.9 6H24.8L32.5 13.6V33Q32.5 34.1 31.4 34.1H9.9Q8.85 34.1 8.85 33V7Q8.85 6 9.9 6Z" fill="none" stroke="#f00" stroke-width="1.9"></path><path d="M24 6V13.6Q24 14.6 25 14.6H32.5" fill="none" stroke="#f00" stroke-width="1.9"></path><path d="M19.6 14.3C19.4 16.5 19.6 18.5 20 20.2C18.8 24 16.5 28 13.2 30M20 20.2C21 22.5 22.5 24 24.5 24.8C26 25.2 28.2 25 28.5 25.5M17.8 25.6C20 25 22.5 24.7 24.5 24.8" fill="none" stroke="#f00" stroke-width="1.3"></path><circle cx="13.7" cy="29.5" r="1.2" fill="#f00"></circle><circle cx="28" cy="25.3" r="0.9" fill="#f00"></circle></svg>
<div class="a" style="left:213px;top:907.25px;width:39px;height:25px;background:#cbc9f0;border-radius:5px;"></div>
<span class="t" style="left: 221px; top: 910.55px; font-size: 15px; line-height: 19px; color: rgb(58, 106, 160); transform: scaleX(1.0215);">Ver</span>
<svg class="a" style="left:270px;top:874.25px;" width="31" height="31" viewBox="0 0 31 31"><path d="M6.6 22.5H3.2Q1 22.5 1 20.3V3.2Q1 1 3.2 1H20.3Q22.5 1 22.5 3.2V6.6" fill="none" stroke="#2c5f9c" stroke-width="2.1"></path><rect x="7.95" y="7.95" width="21.2" height="21" rx="2.5" fill="none" stroke="#2c5f9c" stroke-width="2.1"></rect></svg>
<svg class="a" style="left:317px;top:874.25px;" width="26" height="30.5" viewBox="0 0 26 30.5"><path d="M2.2 1.2H16.8L24.8 8.9V28Q24.8 29 23.8 29H2.2Q1.2 29 1.2 28V2.2Q1.2 1.2 2.2 1.2Z" fill="none" stroke="#5f5f5f" stroke-width="2"></path><path d="M16 1.2V9.2Q16 10 16.8 10H24.8" fill="none" stroke="#5f5f5f" stroke-width="2"></path><path d="M8.9 13.7L4.5 18.4L8.9 23.2M16.8 13.7L21.2 18.4L16.8 23.2M14.3 11.5L11.7 25.4" fill="none" stroke="#5f5f5f" stroke-width="1.9"></path></svg>
<svg class="a" style="left:359px;top:878.25px;" width="31" height="24" viewBox="0 0 31 24"><path d="M0 3Q0 0 3 0H28Q31 0 31 3Q31 5 28.5 7L15.5 16L2.5 7Q0 5 0 3Z" fill="#229de6"></path><path d="M0 8.5L15.5 19L31 8.5V21Q31 24 28 24H3Q0 24 0 21Z" fill="#229de6"></path></svg>
<svg class="a" style="left:434px;top:876.25px;" width="26" height="26" viewBox="0 0 26 26"><circle cx="13" cy="13" r="11.2" fill="none" stroke="#f00" stroke-width="3.6"></circle><path d="M20.5 5.5L5.5 20.5" stroke="#f00" stroke-width="3.6"></path></svg>
<svg class="a" style="left:517px;top:874.25px;" width="26" height="30" viewBox="0 0 26 30"><path d="M0.8 0Q0 0 0 1V29.3Q0 30 0.8 30H25Q26 30 26 29V10.2H15V0Z" fill="#121e30"></path><path d="M17 0.8L26 9.3H17Z" fill="#121e30"></path><path d="M6.2 14h13.6M6.2 18.5h13.6M6.2 23h13.6" stroke="#fff" stroke-width="1.9"></path></svg>
<svg class="a" style="left:613px;top:875.25px;" width="23" height="30" viewBox="0 0 23 30"><path d="M0 6H3.9V30H8.4V6H12.2L6.1 0Z" fill="#121e30"></path><path d="M14.9 0H19.1V23.7H22.8L16.9 30L10.9 23.7H14.9Z" fill="#121e30"></path></svg>
<span class="t" style="left: 722.2px; top: 877.76px; font-size: 15.7px; line-height: 20px; color: rgb(74, 74, 74); transform: scaleX(0.9563);">Publico en General</span>
<span class="t" style="left: 898px; top: 878.76px; font-size: 15.7px; line-height: 20px; color: rgb(52, 102, 160); transform: scaleX(0.9303);">XAXX010101000</span>
<span class="t" style="left: 1058.75px; top: 877.76px; font-size: 15.7px; line-height: 20px; color: rgb(74, 74, 74); transform: scaleX(0.9315);">F / 796</span>
<span class="t" style="left: 1170.3px; top: 877.76px; font-size: 15.7px; line-height: 20px; color: rgb(74, 74, 74); transform: scaleX(0.9461);">193.00</span>
<span class="t" style="left: 1268px; top: 877.76px; font-size: 15.7px; line-height: 20px; color: rgb(74, 74, 74); transform: scaleX(0.9738);">Nota de Crédito</span>
<span class="t" style="left: 1429.3px; top: 877.76px; font-size: 15.7px; line-height: 20px; color: rgb(74, 74, 74); transform: scaleX(0.9432);">2023-10-04 00:34:00</span>
<div class="a" style="left:1617px;top:877.25px;width:59px;height:22px;background:#74b85c;border-radius:3px;"></div>
<span class="t" style="left: 1623.35px; top: 880.25px; font-size: 13px; line-height: 16px; color: rgb(255, 255, 255); font-weight: bold; transform: scaleX(0.9696);">Vigente</span>
<div class="a" style="left:1730px;top:877.25px;width:24px;height:22px;background:#74b85c;border-radius:3px;"></div>
<span class="t" style="left: 1736.3px; top: 880.25px; font-size: 13px; line-height: 16px; color: rgb(255, 255, 255); font-weight: bold; transform: scaleX(0.9271);">SI</span>
<span class="t" style="left: 1806.8px; top: 877.76px; font-size: 15.7px; line-height: 20px; color: rgb(74, 74, 74); transform: scaleX(1.0062);">admin</span>
<div class="a" style="left:41px;top:941.00px;width:1817px;height:70.00px;background:#f9f9f9;"></div>
<div class="a" style="left:41px;top:940.5px;width:1817px;height:1px;background:#ebebeb;"></div>
<div class="a" style="left:71px;top:954.0px;width:11px;height:11px;background:#fff;border:1px solid #767676;border-radius:2px;"></div>
<svg class="a" style="left:122px;top:951.0px;" width="26" height="26" viewBox="0 0 26 26"><rect width="26" height="26" rx="5" fill="#03a9f4"></rect><circle cx="8.5" cy="13.2" r="3.6" fill="#fff"></circle><circle cx="18.4" cy="7.9" r="3.6" fill="#fff"></circle><circle cx="18.4" cy="18.3" r="3.6" fill="#fff"></circle><path d="M8.5 13.2L18.4 7.9M8.5 13.2L18.4 18.3" stroke="#fff" stroke-width="2.4"></path></svg>
<svg class="a" style="left:160px;top:944.0px;" width="40" height="40" viewBox="0 0 40 40"><g fill="#74b95a"><path d="M10.1 11.5L13.6 5.9Q14.5 5 15.8 5.2L18.3 5.3L19.9 8.1L15.3 15.1Z"></path><path d="M18.5 5.2L25.4 5.2Q27 5.4 27.8 6.8L28.6 8.9L30.8 8L27.4 13.9L21.1 13.7L22.6 12.3L19.9 7.9Z"></path><path d="M25.8 16.7L29.8 13.9Q30.6 13.5 31.2 14.4L34.6 19.5Q35 21 34.2 21.8L31 23.4Z"></path><path d="M33 23.8L29.8 30Q29.4 30.7 28.4 30.8L24.8 30.8L24.6 33.4L21.1 27.4L24.4 22.2L24.6 24.2L31.5 24.2Z"></path><path d="M9.7 24.2L18.9 25L18.9 31L11.5 30.6Q9.9 30.3 9.6 28.5Z"></path><path d="M6 15.1L13.1 15.3L15.1 20.7L13.1 20.2L8.5 26.2L5.5 21Q5 20 5.6 18.8L7.2 16.3Z"></path></g></svg>
<svg class="a" style="left:212px;top:944.0px;" width="40" height="40" viewBox="0 0 40 40"><path d="M9.9 6H24.8L32.5 13.6V33Q32.5 34.1 31.4 34.1H9.9Q8.85 34.1 8.85 33V7Q8.85 6 9.9 6Z" fill="none" stroke="#f00" stroke-width="1.9"></path><path d="M24 6V13.6Q24 14.6 25 14.6H32.5" fill="none" stroke="#f00" stroke-width="1.9"></path><path d="M19.6 14.3C19.4 16.5 19.6 18.5 20 20.2C18.8 24 16.5 28 13.2 30M20 20.2C21 22.5 22.5 24 24.5 24.8C26 25.2 28.2 25 28.5 25.5M17.8 25.6C20 25 22.5 24.7 24.5 24.8" fill="none" stroke="#f00" stroke-width="1.3"></path><circle cx="13.7" cy="29.5" r="1.2" fill="#f00"></circle><circle cx="28" cy="25.3" r="0.9" fill="#f00"></circle></svg>
<div class="a" style="left:213px;top:982.0px;width:39px;height:25px;background:#cbc9f0;border-radius:5px;"></div>
<span class="t" style="left: 221px; top: 985.3px; font-size: 15px; line-height: 19px; color: rgb(58, 106, 160); transform: scaleX(1.0215);">Ver</span>
<svg class="a" style="left:270px;top:949.0px;" width="31" height="31" viewBox="0 0 31 31"><path d="M6.6 22.5H3.2Q1 22.5 1 20.3V3.2Q1 1 3.2 1H20.3Q22.5 1 22.5 3.2V6.6" fill="none" stroke="#2c5f9c" stroke-width="2.1"></path><rect x="7.95" y="7.95" width="21.2" height="21" rx="2.5" fill="none" stroke="#2c5f9c" stroke-width="2.1"></rect></svg>
<svg class="a" style="left:317px;top:949.0px;" width="26" height="30.5" viewBox="0 0 26 30.5"><path d="M2.2 1.2H16.8L24.8 8.9V28Q24.8 29 23.8 29H2.2Q1.2 29 1.2 28V2.2Q1.2 1.2 2.2 1.2Z" fill="none" stroke="#5f5f5f" stroke-width="2"></path><path d="M16 1.2V9.2Q16 10 16.8 10H24.8" fill="none" stroke="#5f5f5f" stroke-width="2"></path><path d="M8.9 13.7L4.5 18.4L8.9 23.2M16.8 13.7L21.2 18.4L16.8 23.2M14.3 11.5L11.7 25.4" fill="none" stroke="#5f5f5f" stroke-width="1.9"></path></svg>
<svg class="a" style="left:359px;top:953.0px;" width="31" height="24" viewBox="0 0 31 24"><path d="M0 3Q0 0 3 0H28Q31 0 31 3Q31 5 28.5 7L15.5 16L2.5 7Q0 5 0 3Z" fill="#229de6"></path><path d="M0 8.5L15.5 19L31 8.5V21Q31 24 28 24H3Q0 24 0 21Z" fill="#229de6"></path></svg>
<svg class="a" style="left:434px;top:951.0px;" width="26" height="26" viewBox="0 0 26 26"><circle cx="13" cy="13" r="11.2" fill="none" stroke="#f00" stroke-width="3.6"></circle><path d="M20.5 5.5L5.5 20.5" stroke="#f00" stroke-width="3.6"></path></svg>
<svg class="a" style="left:613px;top:950.0px;" width="23" height="30" viewBox="0 0 23 30"><path d="M0 6H3.9V30H8.4V6H12.2L6.1 0Z" fill="#121e30"></path><path d="M14.9 0H19.1V23.7H22.8L16.9 30L10.9 23.7H14.9Z" fill="#121e30"></path></svg>
<span class="t" style="left: 744.65px; top: 952.51px; font-size: 15.7px; line-height: 20px; color: rgb(74, 74, 74); transform: scaleX(0.8704);">NO BORRAR</span>
<span class="t" style="left: 898.65px; top: 953.51px; font-size: 15.7px; line-height: 20px; color: rgb(52, 102, 160); transform: scaleX(0.9195);">XEXX010101000</span>
<span class="t" style="left: 1050px; top: 952.51px; font-size: 15.7px; line-height: 20px; color: rgb(74, 74, 74); transform: scaleX(0.903);">FAC / 280</span>
<span class="t" style="left: 1178.6px; top: 952.51px; font-size: 15.7px; line-height: 20px; color: rgb(74, 74, 74); transform: scaleX(0.9428);">1.16</span>
<span class="t" style="left: 1290.25px; top: 952.51px; font-size: 15.7px; line-height: 20px; color: rgb(74, 74, 74); transform: scaleX(0.8536);">FACTURA</span>
<span class="t" style="left: 1429.3px; top: 952.51px; font-size: 15.7px; line-height: 20px; color: rgb(74, 74, 74); transform: scaleX(0.9432);">2023-10-03 17:42:00</span>
<div class="a" style="left:1617px;top:952.0px;width:59px;height:22px;background:#74b85c;border-radius:3px;"></div>
<span class="t" style="left: 1623.35px; top: 955px; font-size: 13px; line-height: 16px; color: rgb(255, 255, 255); font-weight: bold; transform: scaleX(0.9696);">Vigente</span>
<div class="a" style="left:1730px;top:952.0px;width:24px;height:22px;background:#74b85c;border-radius:3px;"></div>
<span class="t" style="left: 1736.3px; top: 955px; font-size: 13px; line-height: 16px; color: rgb(255, 255, 255); font-weight: bold; transform: scaleX(0.9271);">SI</span>
<span class="t" style="left: 1806.8px; top: 952.51px; font-size: 15.7px; line-height: 20px; color: rgb(74, 74, 74); transform: scaleX(1.0062);">admin</span>
<div class="a" style="left:113px;top:343px;width:1px;height:660px;background:#ebebeb;"></div>
<div class="a" style="left:156px;top:343px;width:1px;height:660px;background:#ebebeb;"></div>
<div class="a" style="left:203px;top:343px;width:1px;height:660px;background:#ebebeb;"></div>
<div class="a" style="left:261px;top:343px;width:1px;height:660px;background:#ebebeb;"></div>
<div class="a" style="left:308px;top:343px;width:1px;height:660px;background:#ebebeb;"></div>
<div class="a" style="left:351px;top:343px;width:1px;height:660px;background:#ebebeb;"></div>
<div class="a" style="left:397px;top:343px;width:1px;height:660px;background:#ebebeb;"></div>
<div class="a" style="left:496px;top:343px;width:1px;height:660px;background:#ebebeb;"></div>
<div class="a" style="left:563px;top:343px;width:1px;height:660px;background:#ebebeb;"></div>
<div class="a" style="left:686px;top:343px;width:1px;height:660px;background:#ebebeb;"></div>
<div class="a" style="left:886px;top:343px;width:1px;height:660px;background:#ebebeb;"></div>
<div class="a" style="left:1022px;top:343px;width:1px;height:660px;background:#ebebeb;"></div>
<div class="a" style="left:1141px;top:343px;width:1px;height:660px;background:#ebebeb;"></div>
<div class="a" style="left:1245px;top:343px;width:1px;height:660px;background:#ebebeb;"></div>
<div class="a" style="left:1398px;top:343px;width:1px;height:660px;background:#ebebeb;"></div>
<div class="a" style="left:1598px;top:343px;width:1px;height:660px;background:#ebebeb;"></div>
<div class="a" style="left:1694px;top:343px;width:1px;height:660px;background:#ebebeb;"></div>
<div class="a" style="left:1789px;top:343px;width:1px;height:660px;background:#ebebeb;"></div>
<div class="a" style="left:41px;top:343px;width:1px;height:660px;background:#ebebeb;"></div>
<div class="a" style="left:1858px;top:98px;width:40px;height:40px;background:#999;border-radius:4px 0 0 4px;"></div>
<svg class="a" style="left:1869px;top:108px;" width="18" height="20" viewBox="0 0 18 20"><path d="M9 0.5Q10.3 0.5 10.3 1.8Q15 3 15 9V13.5L17.5 16.5H0.5L3 13.5V9Q3 3 7.7 1.8Q7.7 0.5 9 0.5Z" fill="#fff"></path><path d="M6.8 17.5Q7 19.8 9 19.8Q11 19.8 11.2 17.5Z" fill="#fff"></path></svg>
<div class="a" style="left:1858px;top:148px;width:38px;height:40px;background:#ff8000;border-right:2px solid #b85c00;border-radius:4px 0 0 4px;"></div>
<svg class="a" style="left:1869px;top:161px;" width="18" height="15" viewBox="0 0 18 15"><path d="M0 0.5H3.2L4.2 3H17.5L15.5 9.5H5.6L6.2 11H16V12.3H5L2.5 1.9H0Z" fill="#fff"></path><circle cx="6.5" cy="13.8" r="1.3" fill="#fff"></circle><circle cx="14.5" cy="13.8" r="1.3" fill="#fff"></circle><path d="M10.3 4.3v4M8.3 6.3h4" stroke="#ff8000" stroke-width="1.4"></path></svg>
<div class="a" style="left:1858px;top:198px;width:40px;height:40px;background:#fff;"></div>
<svg class="a" style="left:1866px;top:205.8px;" width="23.5" height="23.5" viewBox="0 0 40 40"><path d="M9.9 6H24.8L32.5 13.6V33Q32.5 34.1 31.4 34.1H9.9Q8.85 34.1 8.85 33V7Q8.85 6 9.9 6Z" fill="none" stroke="#f00" stroke-width="2.4"></path><path d="M24 6V13.6Q24 14.6 25 14.6H32.5" fill="none" stroke="#f00" stroke-width="2.4"></path><path d="M19.6 14.3C19.4 16.5 19.6 18.5 20 20.2C18.8 24 16.5 28 13.2 30M20 20.2C21 22.5 22.5 24 24.5 24.8C26 25.2 28.2 25 28.5 25.5M17.8 25.6C20 25 22.5 24.7 24.5 24.8" fill="none" stroke="#f00" stroke-width="1.8"></path><circle cx="13.7" cy="29.5" r="1.2" fill="#f00"></circle><circle cx="28" cy="25.3" r="0.9" fill="#f00"></circle></svg>
<div class="a" style="left:1858px;top:248px;width:40px;height:40px;background:#0a88d6;border-radius:4px 0 0 4px;"></div>
<svg class="a" style="left:1869px;top:259px;" width="18" height="18" viewBox="0 0 18 18"><path d="M3.5 0.5Q4.5 0 5.3 1L7.6 4.2Q8.2 5.2 7.3 6L6 7.2Q7.3 10.5 10.8 12L12 10.7Q12.8 9.8 13.8 10.4L17 12.7Q18 13.5 17.5 14.5L16.3 16.5Q15.6 17.6 14 17.4Q3.5 15.5 0.6 4Q0.4 2.4 1.5 1.7Z" fill="#fff"></path></svg>
<div class="a" style="left:1828px;top:902px;width:50px;height:49px;background:#75bb5e;border-radius:2px;"></div>
<svg class="a" style="left:1846.5px;top:924px;" width="13" height="9" viewBox="0 0 13 9"><path d="M1.8 7L6.5 2.3L11.2 7" fill="none" stroke="#fff" stroke-width="3"></path></svg>
<div class="a" style="left:1898px;top:0px;width:15px;height:1002px;background:#fafafa;"></div>
<div class="a" style="left:1901px;top:75px;width:9px;height:360px;background:#8c8c8c;border-radius:5px;"></div>
<svg class="a" style="left:1901px;top:6px;" width="9" height="7" viewBox="0 0 9 7"><path d="M0 6.5L4.5 0.5L9 6.5Z" fill="#888"></path></svg>
<svg class="a" style="left:1901px;top:987px;" width="9" height="7" viewBox="0 0 9 7"><path d="M0 0.5L4.5 6.5L9 0.5Z" fill="#888"></path></svg>
<svg class="a" style="left:0;top:0" width="1917" height="1007" viewBox="0 0 1917 1007"><path fill="#323232" fill-rule="evenodd" d="M0 0H1917V1005H0Z M1 0H1905Q1913 0 1913 8V994Q1913 1002 1905 1002H9Q1 1002 1 994Z"></path><rect x="0" y="1005" width="1917" height="2" fill="#d8d8d8"></rect></svg>
</body></html>
